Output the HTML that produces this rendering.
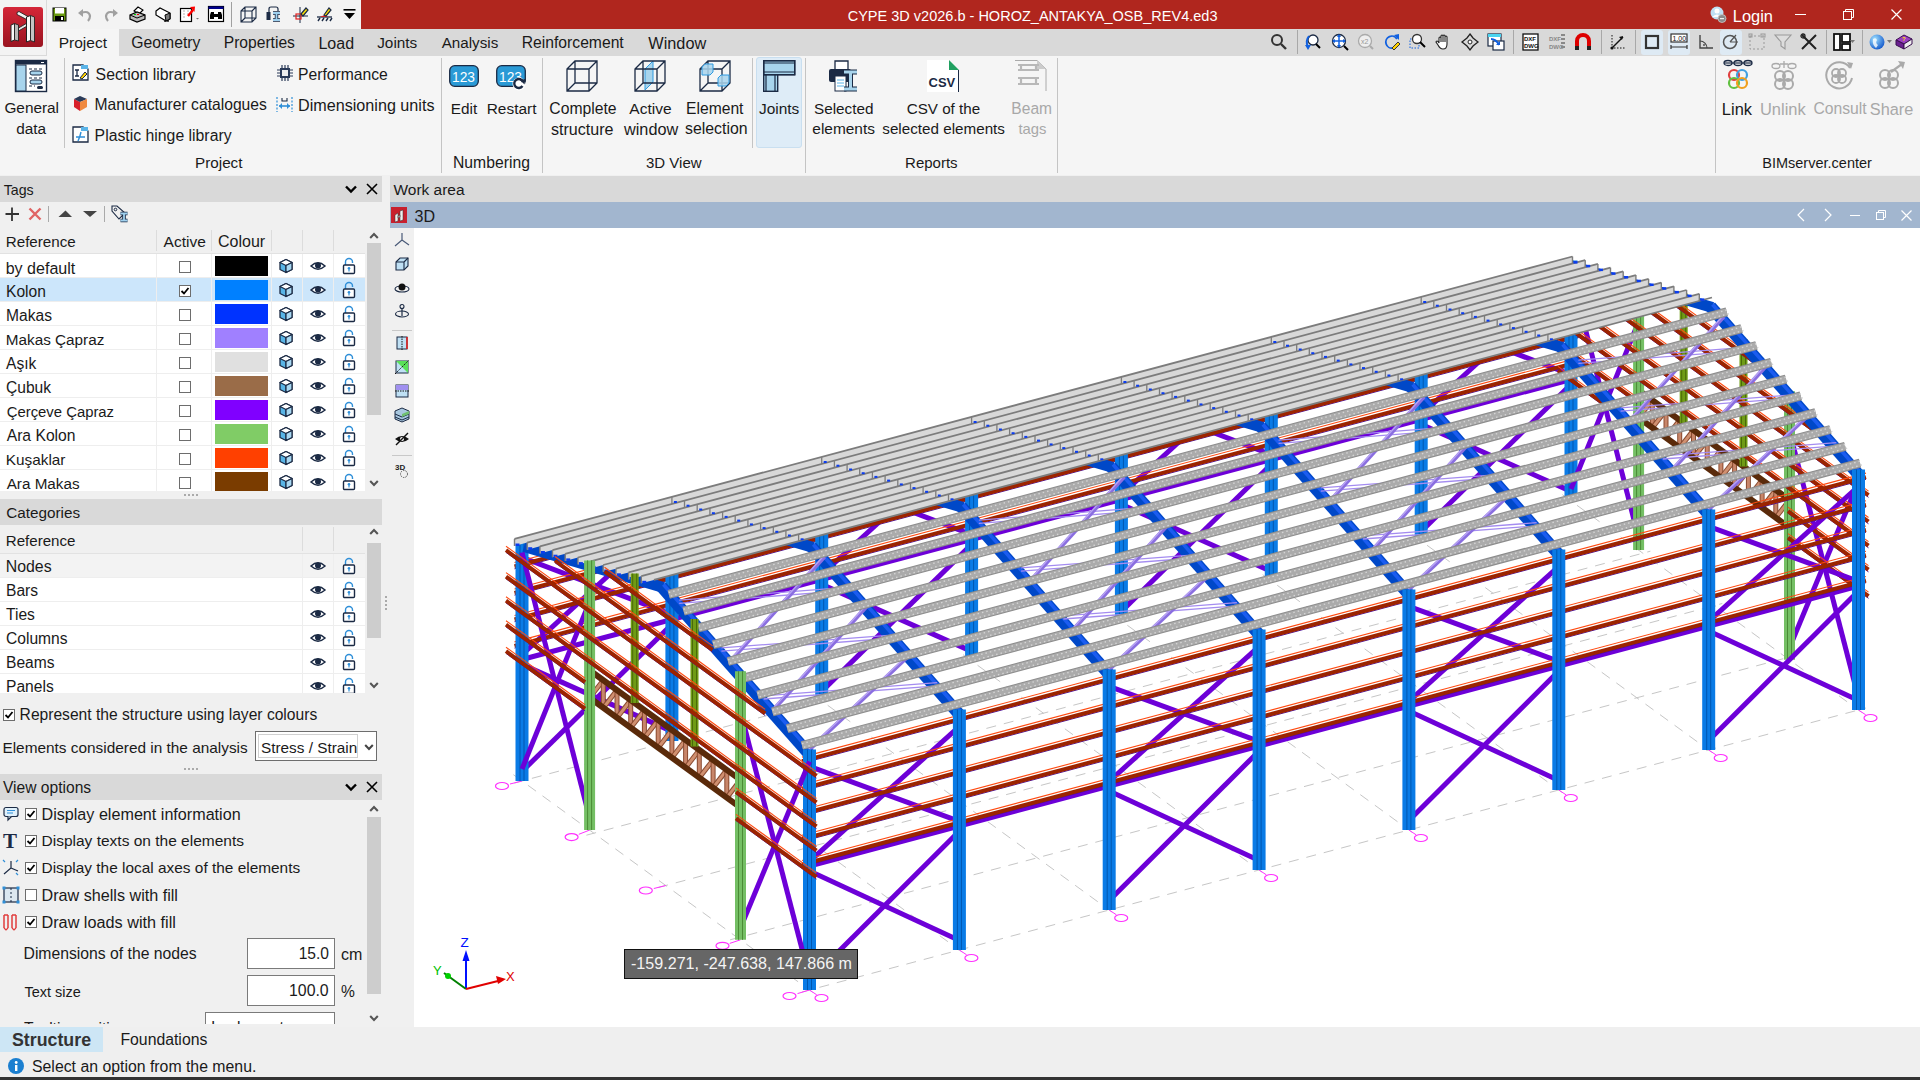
<!DOCTYPE html>
<html><head><meta charset="utf-8">
<style>
html,body{margin:0;padding:0;width:1920px;height:1080px;overflow:hidden;background:#f0f0f0;font-family:"Liberation Sans",sans-serif;font-size:15.6px;color:#1a1a1a}
.a{position:absolute}
.t{position:absolute;white-space:nowrap;line-height:22px;height:22px}
.c{text-align:center}
.g{color:#a8a8a8}
.sep{position:absolute;width:1px;background:#c8c8c8}
.row{position:absolute;left:0;width:365px;height:24px;background:#fff;border-bottom:1px solid #ececec;box-sizing:border-box}
.cb{position:absolute;width:10px;height:10px;border:1px solid #6d6d6d;background:#fff}
.sw{position:absolute;width:53px;height:20px}
svg{position:absolute;overflow:visible}
</style></head><body>

<!-- ===== Title bar / QAT ===== -->
<div class="a" style="left:0;top:0;width:361px;height:29px;background:#f3f3f3"></div>
<div class="a" style="left:361px;top:0;width:1559px;height:29px;background:#b0261e"></div>
<div class="t" style="left:847.70px;top:5px;font-size:14.53px;color:#fff;">CYPE 3D v2026.b - HOROZ_ANTAKYA_OSB_REV4.ed3</div>
<div class="t" style="left:1732.77px;top:5px;font-size:16.41px;color:#fff;">Login</div>
<svg class="a" style="left:52px;top:7px" width="15" height="15" viewBox="0 0 15 15"><rect x="0.5" y="0.5" width="14" height="14" fill="#000"/><rect x="1.5" y="1.5" width="12" height="12" fill="#6a9a10"/><rect x="3" y="1" width="9" height="5.5" fill="#fff"/><rect x="3" y="9" width="9" height="5" fill="#000"/><rect x="9" y="10" width="2" height="3" fill="#fff"/></svg>
<svg class="a" style="left:77px;top:7px" width="16" height="15" viewBox="0 0 16 15"><path d="M4 6 Q12 3 13 9 Q13 12 11 14" fill="none" stroke="#a0a0a0" stroke-width="2.2"/><path d="M1 6 L6 2 L6 10Z" fill="#a0a0a0"/></svg>
<svg class="a" style="left:103px;top:7px" width="16" height="15" viewBox="0 0 16 15"><path d="M12 6 Q4 3 3 9 Q3 12 5 14" fill="none" stroke="#a0a0a0" stroke-width="2.2"/><path d="M15 6 L10 2 L10 10Z" fill="#a0a0a0"/></svg>
<svg class="a" style="left:129px;top:6px" width="17" height="17" viewBox="0 0 17 17"><path d="M5 5 L9 1 L14 4 L10 8Z" fill="#fff" stroke="#000" stroke-width="1.1"/><path d="M1 9 L8 6 L16 9 L16 13 L8 16 L1 13Z" fill="#bbb" stroke="#000" stroke-width="1.2"/><path d="M1 9 L8 12 L16 9" fill="none" stroke="#000" stroke-width="1"/><rect x="5" y="8" width="2" height="1" fill="#0c0"/><rect x="8" y="8" width="2" height="1" fill="#e00"/></svg>
<svg class="a" style="left:155px;top:7px" width="17" height="15" viewBox="0 0 17 15"><path d="M1 4 L5 1 L15 6 L15 12 L11 14 L1 8Z" fill="#fff" stroke="#000" stroke-width="1.2"/><path d="M10 8 L15 6 L15 12 L11 14Z" fill="#777" stroke="#000" stroke-width="1"/><path d="M10 14 V15 M13 13 V15" stroke="#000" stroke-width="1.3"/></svg>
<svg class="a" style="left:180px;top:6px" width="20" height="16" viewBox="0 0 20 16"><rect x="0.5" y="2.5" width="11" height="13" fill="#fff" stroke="#000" stroke-width="1.2"/><path d="M3 5 H5 M3 8 H5 M3 11 H5 M7 5 H9 M7 8 H9" stroke="#ccc" stroke-width="1.5"/><path d="M8 10 L13 4" stroke="#f00" stroke-width="2.4"/><path d="M10 1 L15 0.5 L14.5 6Z" fill="#f00"/><path d="M16 12 L19 12 L17.5 13.5Z" fill="#777"/></svg>
<svg class="a" style="left:208px;top:6px" width="16" height="16" viewBox="0 0 16 16"><rect x="0.5" y="0.5" width="15" height="15" fill="#fff" stroke="#000" stroke-width="1.2"/><rect x="0.5" y="0.5" width="15" height="2.5" fill="#00008a"/><path d="M3 6 H6 V13 H2 V9Z M10 6 H13 L14 9 V13 H10Z" fill="#000"/><rect x="6" y="8" width="4" height="3" fill="#000"/></svg>
<div class="a" style="left:231px;top:2px;width:1px;height:25px;background:#a0a0a0"></div>
<svg class="a" style="left:240px;top:6px" width="17" height="17" viewBox="0 0 17 17"><path d="M1 5 L5 1 H16 V12 L12 16 H1Z M1 5 H12 V16 M12 5 L16 1 M5 1 V12 H16 M5 12 L1 16" fill="none" stroke="#1b2a44" stroke-width="1.1"/></svg>
<svg class="a" style="left:266px;top:6px" width="16" height="17" viewBox="0 0 16 17"><path d="M3 9 V3 Q3 1 5 1 H10 Q12 1 12 3 V5" fill="none" stroke="#1b2a44" stroke-width="1.2"/><rect x="0.5" y="6" width="4" height="8" fill="#1b2a44"/><path d="M7 7 H14 M10.5 7 V14 M7 14 H14" stroke="#1b2a44" stroke-width="3.4"/><path d="M7 7 H14 M10.5 7 V14 M7 14 H14" stroke="#9fd0ee" stroke-width="1.8"/></svg>
<svg class="a" style="left:292px;top:6px" width="17" height="17" viewBox="0 0 17 17"><path d="M1 10 H16 M8 1 V17" stroke="#1b2a44" stroke-width="1"/><rect x="4" y="8" width="5" height="5" fill="none" stroke="#e02020" stroke-width="1.2"/><path d="M9 8 L14 2 L16 4 L11 10Z" fill="#ffe000" stroke="#1b2a44" stroke-width="1.2"/></svg>
<svg class="a" style="left:316px;top:6px" width="17" height="17" viewBox="0 0 17 17"><path d="M1 11 H16" stroke="#1b2a44" stroke-width="1.3"/><path d="M2 15 L4 12 M6 15 L8 12 M10 15 L12 12 M14 15 L16 12" stroke="#1b2a44" stroke-width="1.4"/><path d="M4 11 Q8 8 12 11Z" fill="#e02020"/><path d="M8 9 L13 2 L15 4 L10 10Z" fill="#ffe000" stroke="#1b2a44" stroke-width="1.2"/></svg>
<svg class="a" style="left:343px;top:9px" width="13" height="11" viewBox="0 0 13 11"><rect x="0.5" y="0" width="12" height="1.6" fill="#000"/><path d="M1 4 L12 4 L6.5 10Z" fill="#000"/></svg>
<svg class="a" style="left:1710px;top:6px" width="17" height="17" viewBox="0 0 17 17"><circle cx="7" cy="7" r="6.5" fill="#bfe0f4"/><circle cx="7" cy="5" r="2.5" fill="#fff"/><path d="M2 11 Q7 6 12 11Z" fill="#fff"/><circle cx="12" cy="12.5" r="4" fill="#8a8a8a" stroke="#ccc" stroke-width="0.8"/><rect x="10" y="12" width="4" height="1.2" fill="#eee"/></svg>
<div class="a" style="left:1795px;top:14px;width:11px;height:1px;background:#fff"></div>
<svg class="a" style="left:1843px;top:9px" width="11" height="11" viewBox="0 0 11 11"><rect x="0.5" y="2.5" width="8" height="8" fill="none" stroke="#fff" stroke-width="1"/><path d="M2.5 2.5 V0.5 H10.5 V8.5 H8.5" fill="none" stroke="#fff" stroke-width="1"/></svg>
<svg class="a" style="left:1891px;top:9px" width="11" height="11" viewBox="0 0 11 11"><path d="M0.5 0.5 L10.5 10.5 M10.5 0.5 L0.5 10.5" stroke="#fff" stroke-width="1.2"/></svg>

<!-- logo block -->
<div class="a" style="left:0;top:0;width:46px;height:55px;background:#f3f3f3;border-right:1px solid #dadada;border-bottom:1px solid #dadada"></div>
<svg class="a" style="left:3px;top:7px" width="40" height="40" viewBox="0 0 40 40"><defs><linearGradient id="lg" x1="0" y1="0" x2="0" y2="1"><stop offset="0" stop-color="#d42638"/><stop offset="1" stop-color="#9a1420"/></linearGradient></defs><rect x="0" y="0" width="40" height="40" rx="3" fill="url(#lg)"/><path d="M14 5.5 L16 4.5 L28.5 11.5 L28.5 15 L14 7.5Z" fill="#f4f4f4" stroke="#222" stroke-width="0.9"/><path d="M15.5 21 L28.5 13.5 L28.5 16.5 L15.5 24Z" fill="#e8e8e8" stroke="#222" stroke-width="0.9"/><path d="M8 18 L11.5 16.5 L11.5 33 L8 34.5Z" fill="#fafafa" stroke="#222" stroke-width="1"/><path d="M11.5 16.5 L15.5 18 L15.5 34 L11.5 33Z" fill="#b8b8b8" stroke="#222" stroke-width="0.9"/><path d="M23.5 10 L27.5 8.5 L27.5 33.5 L23.5 35Z" fill="#fafafa" stroke="#222" stroke-width="1"/><path d="M27.5 8.5 L31.5 10 L31.5 35 L27.5 33.5Z" fill="#c4c4c4" stroke="#222" stroke-width="0.9"/></svg>

<!-- ===== Tab bar ===== -->
<div class="a" style="left:47px;top:29px;width:1873px;height:27px;background:#d9d9d9"></div>
<div class="a" style="left:47px;top:29px;width:72px;height:27px;background:#f5f5f5"></div>
<div class="t" style="left:58.73px;top:32px;font-size:15.53px;">Project</div>
<div class="t" style="left:131.30px;top:32px;font-size:15.74px;">Geometry</div>
<div class="t" style="left:223.72px;top:32px;font-size:15.64px;">Properties</div>
<div class="t" style="left:318.40px;top:32px;font-size:16.05px;">Load</div>
<div class="t" style="left:377.20px;top:32px;font-size:15.33px;">Joints</div>
<div class="t" style="left:441.70px;top:32px;font-size:15.20px;">Analysis</div>
<div class="t" style="left:521.72px;top:32px;font-size:15.69px;">Reinforcement</div>
<div class="t" style="left:648.30px;top:32px;font-size:16.29px;">Window</div>
<div class="a" style="left:1641px;top:30px;width:22px;height:25px;background:#deeaf4;border-radius:3px"></div>
<div class="a" style="left:1668px;top:30px;width:22px;height:25px;background:#deeaf4;border-radius:3px"></div>
<div class="a" style="left:1720px;top:30px;width:22px;height:25px;background:#deeaf4;border-radius:3px"></div>
<svg class="a" style="left:1270px;top:33px" width="18" height="18" viewBox="0 0 18 18"><circle cx="7" cy="7" r="5" fill="none" stroke="#333" stroke-width="2"/><path d="M11 11 L16 16" stroke="#333" stroke-width="2.4"/></svg>
<div class="a" style="left:1297px;top:30px;width:1px;height:24px;background:#a8a8a8"></div>
<div class="a" style="left:1513px;top:30px;width:1px;height:24px;background:#a8a8a8"></div>
<div class="a" style="left:1601px;top:30px;width:1px;height:24px;background:#a8a8a8"></div>
<div class="a" style="left:1635px;top:30px;width:1px;height:24px;background:#a8a8a8"></div>
<div class="a" style="left:1826px;top:30px;width:1px;height:24px;background:#a8a8a8"></div>
<div class="a" style="left:1862px;top:30px;width:1px;height:24px;background:#a8a8a8"></div>
<svg class="a" style="left:1304px;top:33px" width="18" height="18" viewBox="0 0 18 18"><circle cx="9" cy="7" r="5" fill="#fff" stroke="#1b2a44" stroke-width="1.3"/><path d="M12 11 L16 15" stroke="#000" stroke-width="2"/><path d="M5 3 Q1 8 4 14" fill="none" stroke="#1060e0" stroke-width="2"/><path d="M1 12 L4 17 L7 12Z" fill="#1060e0"/></svg>
<svg class="a" style="left:1331px;top:33px" width="18" height="18" viewBox="0 0 18 18"><circle cx="8" cy="8" r="6.5" fill="#fff" stroke="#1b2a44" stroke-width="1.3"/><path d="M8 2 V14 M2 8 H14" stroke="#1060e0" stroke-width="1.5"/><path d="M8 1 L6 4 H10Z M8 15 L6 12 H10Z M1 8 L4 6 V10Z M15 8 L12 6 V10Z" fill="#1060e0"/><path d="M13 13 L17 17" stroke="#000" stroke-width="2"/></svg>
<svg class="a" style="left:1357px;top:33px" width="18" height="18" viewBox="0 0 18 18"><circle cx="8" cy="8" r="6.5" fill="#eee" stroke="#aaa" stroke-width="1.3"/><text x="4" y="11" font-size="7" fill="#999" font-family="Liberation Sans">x2</text><path d="M13 13 L16 16" stroke="#aaa" stroke-width="2"/></svg>
<svg class="a" style="left:1383px;top:33px" width="18" height="18" viewBox="0 0 18 18"><path d="M14 6 A6 6 0 1 0 10 15" fill="none" stroke="#1060e0" stroke-width="1.8"/><path d="M11 2 L16 1 L16 7Z" fill="#1060e0"/><path d="M9 15 L15 9 L17 11 L11 17Z" fill="#ffd000" stroke="#333" stroke-width="1"/></svg>
<svg class="a" style="left:1409px;top:33px" width="18" height="18" viewBox="0 0 18 18"><rect x="1" y="6" width="9" height="9" fill="none" stroke="#1060e0" stroke-width="1" stroke-dasharray="1.5 1.5"/><circle cx="8" cy="6" r="4.5" fill="#fff" stroke="#333" stroke-width="1.3"/><path d="M11 9 L16 14" stroke="#000" stroke-width="2"/></svg>
<svg class="a" style="left:1435px;top:33px" width="18" height="18" viewBox="0 0 18 18"><path d="M4 10 V5 Q4 4 5 4 Q6 4 6 5 V9 V3 Q6 2 7 2 Q8 2 8 3 V9 V3 Q8 2 9 2 Q10 2 10 3 V9 V4 Q10 3 11 3 Q12 3 12 4 V11 Q12 16 8 16 Q5 16 3 12 L1 9 Q1 8 2 8 Q3 8 4 10Z" fill="#fff" stroke="#222" stroke-width="1.1"/></svg>
<svg class="a" style="left:1461px;top:33px" width="18" height="18" viewBox="0 0 18 18"><path d="M9 1 L12 5 L17 9 L12 13 L9 17 L6 13 L1 9 L6 5Z" fill="none" stroke="#222" stroke-width="1.3"/><circle cx="9" cy="9" r="2" fill="#fff" stroke="#222"/></svg>
<svg class="a" style="left:1487px;top:33px" width="18" height="18" viewBox="0 0 18 18"><rect x="1" y="1" width="13" height="12" fill="#fff" stroke="#1b2a44" stroke-width="1.2"/><rect x="1" y="1" width="13" height="3" fill="#4ad4f0"/><rect x="6" y="8" width="11" height="9" fill="#fff" stroke="#1b2a44" stroke-width="1.2"/><path d="M4 6 Q9 6 12 12" fill="none" stroke="#1060e0" stroke-width="1.8"/><path d="M9 12 H13 V8Z" fill="#1060e0"/></svg>
<svg class="a" style="left:1522px;top:33px" width="18" height="18" viewBox="0 0 18 18"><rect x="1" y="1" width="15" height="16" fill="#fff" stroke="#111" stroke-width="1.3"/><text x="2" y="8" font-size="6" font-weight="bold" fill="#111" font-family="Liberation Sans">DXF</text><text x="2" y="15" font-size="6" font-weight="bold" fill="#111" font-family="Liberation Sans">DWG</text></svg>
<svg class="a" style="left:1548px;top:33px" width="18" height="18" viewBox="0 0 18 18"><text x="1" y="8" font-size="6" font-weight="bold" fill="#888" font-family="Liberation Sans">DXF</text><text x="1" y="16" font-size="6" font-weight="bold" fill="#888" font-family="Liberation Sans">DWG</text><path d="M13 2 H17 M13 6 H17 M13 10 H17 M13 14 H17" stroke="#888" stroke-width="2"/></svg>
<svg class="a" style="left:1574px;top:33px" width="18" height="18" viewBox="0 0 18 18"><path d="M3 16 V8 A6 6 0 0 1 15 8 V16" fill="none" stroke="#d00" stroke-width="4"/><rect x="1" y="13" width="4" height="4" fill="#222"/><rect x="13" y="13" width="4" height="4" fill="#222"/></svg>
<svg class="a" style="left:1608px;top:33px" width="18" height="18" viewBox="0 0 18 18"><path d="M4 2 V15 H17" fill="none" stroke="#111" stroke-width="1" stroke-dasharray="1.5 1.5"/><path d="M4 15 L15 4" stroke="#111" stroke-width="1.4"/><path d="M15 3 L11 4 L14 7Z" fill="#111"/><circle cx="4" cy="15" r="1.6" fill="#111"/></svg>
<svg class="a" style="left:1643px;top:33px" width="18" height="18" viewBox="0 0 18 18"><rect x="3" y="3" width="12" height="12" fill="none" stroke="#333" stroke-width="2.2"/></svg>
<svg class="a" style="left:1669px;top:32px" width="20" height="20" viewBox="0 0 20 20"><rect x="2" y="2" width="16" height="8" fill="#fff" stroke="#333" stroke-width="1.2"/><text x="3.5" y="9" font-size="7" fill="#111" font-family="Liberation Sans">1.00</text><path d="M2 15 H18 M2 13 V17 M18 13 V17" stroke="#333" stroke-width="1.2"/></svg>
<svg class="a" style="left:1696px;top:33px" width="18" height="18" viewBox="0 0 18 18"><path d="M4 2 V15 H17" fill="none" stroke="#444" stroke-width="1.4"/><path d="M4 8 A7 7 0 0 1 11 15" fill="none" stroke="#444" stroke-width="1.1"/><circle cx="8" cy="12" r="0.9" fill="#444"/></svg>
<svg class="a" style="left:1722px;top:33px" width="18" height="18" viewBox="0 0 18 18"><circle cx="8" cy="9" r="6.5" fill="none" stroke="#555" stroke-width="1.5"/><path d="M8 9 H16 M8 9 L14 2" stroke="#555" stroke-width="1.2"/></svg>
<svg class="a" style="left:1748px;top:33px" width="18" height="18" viewBox="0 0 18 18"><rect x="2" y="3" width="14" height="13" fill="none" stroke="#999" stroke-width="1" stroke-dasharray="2 2"/><rect x="1" y="1" width="3" height="3" fill="none" stroke="#999"/><rect x="13" y="1" width="4" height="3" fill="none" stroke="#999"/></svg>
<svg class="a" style="left:1774px;top:33px" width="18" height="18" viewBox="0 0 18 18"><path d="M1 2 H17 L11 9 V16 L7 13 V9Z" fill="#ddd" stroke="#999" stroke-width="1.1"/></svg>
<svg class="a" style="left:1800px;top:33px" width="18" height="18" viewBox="0 0 18 18"><path d="M2 16 L16 2 M2 2 L16 16" stroke="#222" stroke-width="2"/><circle cx="3" cy="3" r="2" fill="none" stroke="#222" stroke-width="1.3"/></svg>
<svg class="a" style="left:1833px;top:33px" width="18" height="18" viewBox="0 0 18 18"><rect x="1" y="1" width="6" height="16" fill="#fff" stroke="#111" stroke-width="1.8"/><rect x="9" y="1" width="8" height="8" fill="#fff" stroke="#111" stroke-width="1.8"/><rect x="9" y="11" width="8" height="6" fill="#fff" stroke="#111" stroke-width="1.8"/></svg>
<svg class="a" style="left:1850px;top:40px" width="5" height="4" viewBox="0 0 5 4"><path d="M0 0 H5 L2.5 3Z" fill="#777"/></svg>
<svg class="a" style="left:1869px;top:33px" width="18" height="18" viewBox="0 0 18 18"><defs><radialGradient id="gl" cx="0.35" cy="0.3" r="0.8"><stop offset="0" stop-color="#9fe0ff"/><stop offset="1" stop-color="#0a50c8"/></radialGradient></defs><circle cx="8" cy="9" r="7.5" fill="url(#gl)"/><path d="M4 6 Q7 4 8 7 Q6 10 9 12 L7 15 Q3 12 4 6Z" fill="#fff" opacity="0.8"/></svg>
<svg class="a" style="left:1887px;top:40px" width="5" height="4" viewBox="0 0 5 4"><path d="M0 0 H5 L2.5 3Z" fill="#777"/></svg>
<svg class="a" style="left:1895px;top:33px" width="18" height="18" viewBox="0 0 18 18"><path d="M1 7 L9 2 L17 6 L9 11Z" fill="#9a40c0" stroke="#3a1050" stroke-width="1"/><path d="M1 7 L9 11 L9 16 L1 12Z" fill="#6a2090" stroke="#3a1050" stroke-width="1"/><path d="M9 11 L17 6 V11 L9 16Z" fill="#eee" stroke="#3a1050" stroke-width="1"/><text x="7" y="8" font-size="6" fill="#ffe000" font-weight="bold" font-family="Liberation Sans">?</text></svg>

<!-- ===== Ribbon ===== -->
<div class="a" style="left:0;top:56px;width:1920px;height:119px;background:#f5f5f5"></div>
<div class="a" style="left:756px;top:57px;width:46px;height:91px;background:#deecf7;border:1px solid #c9dff0;border-radius:3px;box-sizing:border-box"></div>
<div class="a" style="left:441px;top:58px;width:1px;height:115px;background:#c4c4c4"></div>
<div class="a" style="left:542px;top:58px;width:1px;height:115px;background:#c4c4c4"></div>
<div class="a" style="left:805px;top:58px;width:1px;height:115px;background:#c4c4c4"></div>
<div class="a" style="left:1057px;top:58px;width:1px;height:115px;background:#c4c4c4"></div>
<div class="a" style="left:1715px;top:58px;width:1px;height:115px;background:#c4c4c4"></div>
<div class="a" style="left:64px;top:58px;width:1px;height:90px;background:#c4c4c4"></div>
<div class="a" style="left:752px;top:58px;width:1px;height:90px;background:#c4c4c4"></div>
<svg class="a" style="left:15px;top:60px" width="32" height="32" viewBox="0 0 32 32"><rect x="0.5" y="0.5" width="31" height="31" fill="#fff" stroke="#1b2a44" stroke-width="1.4"/><rect x="0.5" y="0.5" width="31" height="4" fill="#1b2a44"/><rect x="1" y="5" width="10" height="26" fill="#a8d4ec" stroke="#1b2a44" stroke-width="1"/><path d="M14 9 H28 M14 18 H28 M14 26 H20" stroke="#1b2a44" stroke-width="1" stroke-dasharray="3 2"/><rect x="15" y="11" width="12" height="4" rx="2" fill="#a8d4ec" stroke="#1b2a44" stroke-width="1"/><rect x="15" y="20" width="12" height="4" rx="2" fill="#a8d4ec" stroke="#1b2a44" stroke-width="1"/><rect x="22" y="26" width="6" height="3" rx="1.5" fill="#1b2a44"/><rect x="26" y="2" width="3" height="1" fill="#fff"/></svg>
<div class="t" style="left:4.40px;top:97px;font-size:15.36px;">General</div><div class="t" style="left:16.25px;top:118px;font-size:15.36px;">data</div>
<svg class="a" style="left:72px;top:64px" width="17" height="17" viewBox="0 0 17 17"><path d="M1 1 H11 L16 5 V16 H1Z" fill="#fff" stroke="#1b2a44" stroke-width="1.3"/><rect x="9" y="1" width="7" height="4" fill="#5ab4e8"/><path d="M3 6 H7 M5 6 V12 M3 12 H7" stroke="#1b2a44" stroke-width="1.3"/><path d="M8 14 L13 8 L15 10 L10 15Z" fill="#ffd000" stroke="#1b2a44" stroke-width="1"/></svg>
<div class="t" style="left:95.60px;top:64px;font-size:15.81px;">Section library</div>
<svg class="a" style="left:73px;top:95px" width="15" height="17" viewBox="0 0 15 17"><path d="M7 1 L14 4 V12 L7 16 L1 12 V4Z" fill="#e8e8e8"/><path d="M1 4 L7 7 V16 L1 12Z" fill="#d8202a"/><path d="M7 1 L14 4 L7 7 L1 4Z" fill="#2a3a58"/><path d="M7 7 L14 4 V12 L7 16Z" fill="#f08a40"/></svg>
<div class="t" style="left:94.52px;top:94px;font-size:15.67px;">Manufacturer catalogues</div>
<svg class="a" style="left:72px;top:126px" width="17" height="17" viewBox="0 0 17 17"><path d="M1 1 H11 L16 5 V16 H1Z" fill="#fff" stroke="#1b2a44" stroke-width="1.3"/><rect x="9" y="1" width="7" height="4" fill="#5ab4e8"/><path d="M4 11 H13 M9 6 Q8 11 6 15" stroke="#2f8fd8" stroke-width="1.4" fill="none"/></svg>
<div class="t" style="left:94.61px;top:125px;font-size:15.80px;">Plastic hinge library</div>
<svg class="a" style="left:277px;top:65px" width="16" height="16" viewBox="0 0 16 16"><rect x="3" y="3" width="10" height="10" fill="#2a3a58"/><rect x="5" y="5" width="6" height="6" fill="#eee"/><path d="M5 0 V3 M8 0 V3 M11 0 V3 M5 13 V16 M8 13 V16 M11 13 V16 M0 5 H3 M0 8 H3 M0 11 H3 M13 5 H16 M13 8 H16 M13 11 H16" stroke="#2a3a58" stroke-width="1.2"/></svg>
<div class="t" style="left:298.02px;top:64px;font-size:15.70px;">Performance</div>
<svg class="a" style="left:276px;top:96px" width="17" height="17" viewBox="0 0 17 17"><path d="M1 1 V16 M16 1 V16" stroke="#2f8fd8" stroke-width="1.2" stroke-dasharray="2 1.5"/><path d="M3 10 H14" stroke="#2f8fd8" stroke-width="1.6"/><path d="M3 10 L6 7 V13Z M14 10 L11 7 V13Z" fill="#2f8fd8"/><path d="M6 2 V5 H11 V2" fill="none" stroke="#1b2a44" stroke-width="1.1"/></svg>
<div class="t" style="left:297.99px;top:94px;font-size:16.16px;">Dimensioning units</div>
<div class="t" style="left:195.05px;top:152px;font-size:15.24px;">Project</div>
<svg class="a" style="left:449px;top:65px" width="30" height="22" viewBox="0 0 30 22"><rect x="0.7" y="0.7" width="28.6" height="20.6" rx="5" fill="#2a9ad6" stroke="#1b2a44" stroke-width="1.3"/><text x="3" y="16.5" font-size="14.5" fill="#fff" font-family="Liberation Sans" textLength="23" lengthAdjust="spacingAndGlyphs">123</text></svg>
<div class="t" style="left:450.74px;top:98px;font-size:15.34px;">Edit</div>
<svg class="a" style="left:496px;top:65px" width="31" height="26" viewBox="0 0 31 26"><rect x="0.7" y="0.7" width="28.6" height="20.6" rx="5" fill="#2a9ad6" stroke="#1b2a44" stroke-width="1.3"/><text x="3" y="16.5" font-size="14.5" fill="#fff" font-family="Liberation Sans" textLength="23" lengthAdjust="spacingAndGlyphs">123</text><circle cx="23" cy="19" r="6.5" fill="#fff"/><path d="M27 17 A4.5 4.5 0 1 0 26.5 21" fill="none" stroke="#1b2a44" stroke-width="2.4"/><path d="M24 15 L29.5 14 L28.5 19.5Z" fill="#1b2a44"/></svg>
<div class="t" style="left:486.74px;top:98px;font-size:15.43px;">Restart</div>
<div class="t" style="left:453.02px;top:152px;font-size:15.72px;">Numbering</div>
<svg class="a" style="left:566px;top:60px" width="32" height="32" viewBox="0 0 32 32"><path d="M1 9 L9 1 H31 V23 L23 31 H1Z M1 9 H23 V31 M23 9 L31 1 M9 1 V23 H31 M9 23 L1 31" fill="none" stroke="#1b2a44" stroke-width="1.3"/></svg>
<div class="t" style="left:549.30px;top:98px;font-size:15.73px;">Complete</div><div class="t" style="left:551.00px;top:118px;font-size:16.09px;">structure</div>
<svg class="a" style="left:634px;top:60px" width="32" height="32" viewBox="0 0 32 32"><path d="M11 30 V9 L19 1 V22Z" fill="#a8d4ec" stroke="#2f9ae0" stroke-width="1"/><path d="M1 9 L9 1 H31 V23 L23 31 H1Z M1 9 H23 V31 M23 9 L31 1 M9 1 V23 H31 M9 23 L1 31" fill="none" stroke="#1b2a44" stroke-width="1.3"/></svg>
<div class="t" style="left:629.30px;top:98px;font-size:15.53px;">Active</div><div class="t" style="left:624.02px;top:118px;font-size:16.26px;">window</div>
<svg class="a" style="left:699px;top:60px" width="32" height="32" viewBox="0 0 32 32"><path d="M1 9 L9 1 H31 V23 L23 31 H1Z M1 9 H23 V31 M23 9 L31 1 M9 1 V23 H31 M9 23 L1 31" fill="none" stroke="#1b2a44" stroke-width="1.3"/><path d="M3 7 L6 4 H14 V12 L11 15 H3Z" fill="#a8d4ec" fill-opacity="0.85" stroke="#2f9ae0" stroke-width="1"/><path d="M19 18 L22 15 H30 V23 L27 26 H19Z" fill="#a8d4ec" fill-opacity="0.85" stroke="#2f9ae0" stroke-width="1"/></svg>
<div class="t" style="left:686.02px;top:98px;font-size:15.66px;">Element</div><div class="t" style="left:685.00px;top:118px;font-size:15.86px;">selection</div>
<div class="t" style="left:646.00px;top:152px;font-size:15.00px;">3D View</div>
<svg class="a" style="left:763px;top:60px" width="32" height="32" viewBox="0 0 32 32"><rect x="0.7" y="0.7" width="31" height="14" fill="#a8d4ec" stroke="#1b2a44" stroke-width="1.4"/><path d="M0.7 3 H31.7 M0.7 12 H31.7" stroke="#1b2a44" stroke-width="1.2"/><rect x="0.7" y="14.7" width="14" height="16.6" fill="#a8d4ec" stroke="#1b2a44" stroke-width="1.4"/><path d="M3 14.7 V31.3 M12 14.7 V31.3" stroke="#1b2a44" stroke-width="1.2"/><rect x="0.7" y="0.7" width="31" height="14" fill="none" stroke="#1b2a44" stroke-width="1.4"/></svg>
<div class="t" style="left:759.00px;top:98px;font-size:15.43px;">Joints</div>
<svg class="a" style="left:828px;top:60px" width="31" height="32" viewBox="0 0 31 32"><path d="M7 9 V1 H20 V9" fill="#fff" stroke="#1b2a44" stroke-width="1.3"/><rect x="1" y="9" width="22" height="13" rx="2" fill="#1b2a44"/><rect x="7" y="16" width="11" height="15" fill="#fff" stroke="#1b2a44" stroke-width="1"/><path d="M9 20 H16 M9 23 H16 M9 26 H16" stroke="#5ab4e8" stroke-width="1"/><path d="M16 12 H29 M22.5 12 V29 M16 29 H29" stroke="#1b2a44" stroke-width="5"/><path d="M16 12 H29 M22.5 12 V29 M16 29 H29" stroke="#a8d4ec" stroke-width="3"/></svg>
<div class="t" style="left:814.00px;top:98px;font-size:15.30px;">Selected</div><div class="t" style="left:812.30px;top:118px;font-size:15.45px;">elements</div>
<svg class="a" style="left:927px;top:60px" width="32" height="32" viewBox="0 0 32 32"><path d="M0 0 H22 L32 10 V32 H0Z" fill="#fff"/><path d="M22 0 L32 10 H22Z" fill="#20a060"/><path d="M31.5 10 V32" stroke="#1b2a44" stroke-width="1"/><text x="1.5" y="27" font-size="13" font-weight="bold" fill="#1b2a44" font-family="Liberation Sans">CSV</text></svg>
<div class="t" style="left:906.70px;top:98px;font-size:15.20px;">CSV of the</div><div class="t" style="left:882.30px;top:118px;font-size:15.22px;">selected elements</div>
<svg class="a" style="left:1015px;top:60px" width="32" height="32" viewBox="0 0 32 32"><path d="M0 0.5 H22 L31 9 V31" fill="none" stroke="#aaa" stroke-width="1"/><path d="M22 0.5 L31 9 H22Z" fill="#ccc"/><path d="M3 5 H24 M3 10 H24 M6 5 V10 M21 5 V10 M3 18 H24 M3 24 H24 M6 18 V24 M21 18 V24" stroke="#b8b8b8" stroke-width="2.2" fill="none"/></svg>
<div class="t g" style="left:1011.33px;top:98px;font-size:15.58px;">Beam</div><div class="t g" style="left:1018.50px;top:118px;font-size:14.81px;">tags</div>
<div class="t" style="left:905.06px;top:152px;font-size:15.03px;">Reports</div>
<svg class="a" style="left:1722px;top:60px" width="32" height="32" viewBox="0 0 32 32"><path d="M2 3 H30" stroke="#1b2a44" stroke-width="1.2"/><ellipse cx="6" cy="3" rx="4" ry="2.5" fill="none" stroke="#1b2a44" stroke-width="1.3"/><ellipse cx="16" cy="3" rx="4" ry="2.5" fill="none" stroke="#1b2a44" stroke-width="1.3"/><ellipse cx="26" cy="3" rx="4" ry="2.5" fill="none" stroke="#1b2a44" stroke-width="1.3"/><circle cx="12" cy="15" r="5" fill="none" stroke="#e04040" stroke-width="2.2"/><circle cx="20" cy="15" r="5" fill="none" stroke="#40a0e0" stroke-width="2.2"/><circle cx="12" cy="23" r="5" fill="none" stroke="#60c040" stroke-width="2.2"/><circle cx="20" cy="23" r="5" fill="none" stroke="#f0a020" stroke-width="2.2"/></svg>
<div class="t" style="left:1721.87px;top:98px;font-size:16.41px;">Link</div>
<svg class="a" style="left:1768px;top:60px" width="32" height="32" viewBox="0 0 32 32"><path d="M16 1 V8 M12 4 H20" stroke="#aaa" stroke-width="1.3"/><ellipse cx="8" cy="6" rx="4" ry="2.5" fill="none" stroke="#aaa" stroke-width="1.3"/><ellipse cx="24" cy="6" rx="4" ry="2.5" fill="none" stroke="#aaa" stroke-width="1.3"/><circle cx="12" cy="16" r="5" fill="none" stroke="#aaa" stroke-width="2"/><circle cx="20" cy="16" r="5" fill="none" stroke="#aaa" stroke-width="2"/><circle cx="12" cy="24" r="5" fill="none" stroke="#aaa" stroke-width="2"/><circle cx="20" cy="24" r="5" fill="none" stroke="#aaa" stroke-width="2"/></svg>
<div class="t g" style="left:1759.97px;top:98px;font-size:16.48px;">Unlink</div>
<svg class="a" style="left:1823px;top:60px" width="32" height="32" viewBox="0 0 32 32"><path d="M27 8 A13 13 0 1 0 29 18" fill="none" stroke="#aaa" stroke-width="2"/><path d="M24 2 L30 3 L28 9Z" fill="#aaa"/><circle cx="13" cy="13" r="4" fill="none" stroke="#aaa" stroke-width="1.8"/><circle cx="19" cy="13" r="4" fill="none" stroke="#aaa" stroke-width="1.8"/><circle cx="13" cy="19" r="4" fill="none" stroke="#aaa" stroke-width="1.8"/><circle cx="19" cy="19" r="4" fill="none" stroke="#aaa" stroke-width="1.8"/></svg>
<div class="t g" style="left:1813.40px;top:98px;font-size:15.71px;">Consult</div>
<svg class="a" style="left:1875px;top:60px" width="32" height="32" viewBox="0 0 32 32"><path d="M16 12 L27 4" stroke="#aaa" stroke-width="2.2"/><path d="M23 1 L30 2 L28 9Z" fill="#aaa"/><circle cx="10" cy="15" r="5" fill="none" stroke="#aaa" stroke-width="2"/><circle cx="18" cy="15" r="5" fill="none" stroke="#aaa" stroke-width="2"/><circle cx="10" cy="23" r="5" fill="none" stroke="#aaa" stroke-width="2"/><circle cx="18" cy="23" r="5" fill="none" stroke="#aaa" stroke-width="2"/></svg>
<div class="t g" style="left:1869.80px;top:98px;font-size:16.30px;">Share</div>
<div class="t" style="left:1762.29px;top:152px;font-size:14.51px;">BIMserver.center</div>

<!-- ===== Left panels ===== -->
<div class="a" style="left:0;top:176px;width:382px;height:26px;background:#d9d9d9"></div>
<div class="t" style="left:3.70px;top:179px;font-size:14.20px;">Tags</div>
<svg class="a" style="left:345px;top:183px" width="12" height="12" viewBox="-6 -6 12 12"><path d="M-5 -2.5 L0 2.5 L5 -2.5" fill="none" stroke="#000" stroke-width="2.4"/></svg>
<svg class="a" style="left:365px;top:182px" width="14" height="14" viewBox="0 0 14 14"><path d="M2 2 L12 12 M12 2 L2 12" stroke="#000" stroke-width="1.6"/></svg>
<svg class="a" style="left:4px;top:206px" width="16" height="16" viewBox="0 0 16 16"><path d="M8 1.5 V15 M1.5 8 H15" stroke="#333" stroke-width="1.8"/></svg>
<svg class="a" style="left:27px;top:206px" width="16" height="16" viewBox="0 0 16 16"><path d="M2.5 2.5 L13.5 13.5 M13.5 2.5 L2.5 13.5" stroke="#e06464" stroke-width="2.4"/></svg>
<div class="a" style="left:48px;top:206px;width:1px;height:16px;background:#aaa"></div>
<svg class="a" style="left:57px;top:206px" width="16" height="16" viewBox="0 0 16 16"><path d="M1.5 11 L8.5 4.5 L15 11Z" fill="#444"/></svg>
<svg class="a" style="left:81px;top:206px" width="16" height="16" viewBox="0 0 16 16"><path d="M2 5 L16 5 L9 11Z" fill="#444"/></svg>
<div class="a" style="left:104px;top:206px;width:1px;height:16px;background:#aaa"></div>
<svg class="a" style="left:111px;top:205px" width="18" height="18" viewBox="0 0 18 18"><path d="M1 1 L6 1 L14 8 L8 14 L1 6Z" fill="none" stroke="#1b2a44" stroke-width="1.1"/><circle cx="4.5" cy="4.5" r="1.3" fill="none" stroke="#1b2a44" stroke-width="1"/><path d="M9.5 8.5 H16.5 M13 8.5 V15.5 M9.5 15.5 H16.5" stroke="#1b2a44" stroke-width="3.6"/><path d="M9.5 8.5 H16.5 M13 8.5 V15.5 M9.5 15.5 H16.5" stroke="#9fd0ee" stroke-width="1.8"/></svg>
<div class="a" style="left:0;top:228px;width:365px;height:25px;background:#f0f0f0;border-bottom:1px solid #e2e2e2"></div>
<div class="a" style="left:156px;top:230px;width:1px;height:21px;background:#dcdcdc"></div>
<div class="a" style="left:211px;top:230px;width:1px;height:21px;background:#dcdcdc"></div>
<div class="a" style="left:271px;top:230px;width:1px;height:21px;background:#dcdcdc"></div>
<div class="a" style="left:302px;top:230px;width:1px;height:21px;background:#dcdcdc"></div>
<div class="a" style="left:333px;top:230px;width:1px;height:21px;background:#dcdcdc"></div>
<div class="t" style="left:5.75px;top:231px;font-size:15.18px;">Reference</div>
<div class="t" style="left:163.60px;top:231px;font-size:15.50px;">Active</div>
<div class="t" style="left:218.00px;top:231px;font-size:16.00px;">Colour</div>
<div class="a" style="left:0;top:254px;width:365px;height:237px;overflow:hidden">
<div class="a" style="left:0;top:0px;width:365px;height:24px;background:#fff"></div>
<div class="a" style="left:0;top:23px;width:365px;height:1px;background:#eeeeee"></div>
<div class="a" style="left:156px;top:0px;width:1px;height:24px;background:#eeeeee"></div>
<div class="a" style="left:211px;top:0px;width:1px;height:24px;background:#eeeeee"></div>
<div class="a" style="left:271px;top:0px;width:1px;height:24px;background:#eeeeee"></div>
<div class="a" style="left:302px;top:0px;width:1px;height:24px;background:#eeeeee"></div>
<div class="a" style="left:333px;top:0px;width:1px;height:24px;background:#eeeeee"></div>
<div class="t" style="left:5.70px;top:3px;font-size:16.06px;">by default</div>
<div class="cb" style="left:179px;top:7px"></div>
<div class="sw" style="left:215px;top:2px;background:#000000"></div>
<svg class="a" style="left:278px;top:4px" width="16" height="16" viewBox="0 0 16 16"><path d="M8 1.5 L14 4.5 L14 11.5 L8 14.5 L2 11.5 L2 4.5 Z" fill="#58b4e6" stroke="#1b2a44" stroke-width="1.3" stroke-linejoin="round"/><path d="M2 4.5 L8 7.5 L14 4.5 L8 1.5 Z" fill="#fff" stroke="#1b2a44" stroke-width="1.2" stroke-linejoin="round"/><path d="M8 7.5 L8 14.5" stroke="#1b2a44" stroke-width="1.2"/><path d="M8 7.5 L14 4.5 L14 11.5 L8 14.5Z" fill="#a9d8f2" stroke="#1b2a44" stroke-width="1.2" stroke-linejoin="round"/></svg><svg class="a" style="left:310px;top:4px" width="16" height="16" viewBox="0 0 16 16"><path d="M1 8 Q8 1.5 15 8 Q8 14.5 1 8Z" fill="#fff" stroke="#1b2a44" stroke-width="1.5"/><circle cx="8" cy="7.6" r="3" fill="#1b2a44"/></svg><svg class="a" style="left:341px;top:3px" width="16" height="18" viewBox="0 0 16 18"><path d="M4.5 8 V5 A3.5 3.5 0 0 1 11.5 5 V6" fill="none" stroke="#2f8fd8" stroke-width="1.4"/><rect x="2.5" y="8" width="11" height="8.5" rx="1" fill="#fff" stroke="#1b2a44" stroke-width="1.4"/><circle cx="8" cy="11.3" r="1.3" fill="#2f8fd8"/><rect x="7.4" y="11.5" width="1.2" height="3" fill="#2f8fd8"/></svg>
<div class="a" style="left:0;top:24px;width:365px;height:24px;background:#cce6fb"></div>
<div class="a" style="left:0;top:47px;width:365px;height:1px;background:#eeeeee"></div>
<div class="a" style="left:156px;top:24px;width:1px;height:24px;background:#eeeeee"></div>
<div class="a" style="left:211px;top:24px;width:1px;height:24px;background:#eeeeee"></div>
<div class="a" style="left:271px;top:24px;width:1px;height:24px;background:#eeeeee"></div>
<div class="a" style="left:302px;top:24px;width:1px;height:24px;background:#eeeeee"></div>
<div class="a" style="left:333px;top:24px;width:1px;height:24px;background:#eeeeee"></div>
<div class="t" style="left:6px;top:27px">Kolon</div>
<div class="cb" style="left:179px;top:31px"></div><svg class="a" style="left:179px;top:31px" width="12" height="12" viewBox="0 0 12 12"><path d="M2.5 6 L5 8.5 L9.5 3" fill="none" stroke="#000" stroke-width="1.8"/></svg>
<div class="sw" style="left:215px;top:26px;background:#0080ff"></div>
<svg class="a" style="left:278px;top:28px" width="16" height="16" viewBox="0 0 16 16"><path d="M8 1.5 L14 4.5 L14 11.5 L8 14.5 L2 11.5 L2 4.5 Z" fill="#58b4e6" stroke="#1b2a44" stroke-width="1.3" stroke-linejoin="round"/><path d="M2 4.5 L8 7.5 L14 4.5 L8 1.5 Z" fill="#fff" stroke="#1b2a44" stroke-width="1.2" stroke-linejoin="round"/><path d="M8 7.5 L8 14.5" stroke="#1b2a44" stroke-width="1.2"/><path d="M8 7.5 L14 4.5 L14 11.5 L8 14.5Z" fill="#a9d8f2" stroke="#1b2a44" stroke-width="1.2" stroke-linejoin="round"/></svg><svg class="a" style="left:310px;top:28px" width="16" height="16" viewBox="0 0 16 16"><path d="M1 8 Q8 1.5 15 8 Q8 14.5 1 8Z" fill="#fff" stroke="#1b2a44" stroke-width="1.5"/><circle cx="8" cy="7.6" r="3" fill="#1b2a44"/></svg><svg class="a" style="left:341px;top:27px" width="16" height="18" viewBox="0 0 16 18"><path d="M4.5 8 V5 A3.5 3.5 0 0 1 11.5 5 V6" fill="none" stroke="#2f8fd8" stroke-width="1.4"/><rect x="2.5" y="8" width="11" height="8.5" rx="1" fill="#fff" stroke="#1b2a44" stroke-width="1.4"/><circle cx="8" cy="11.3" r="1.3" fill="#2f8fd8"/><rect x="7.4" y="11.5" width="1.2" height="3" fill="#2f8fd8"/></svg>
<div class="a" style="left:0;top:48px;width:365px;height:24px;background:#fff"></div>
<div class="a" style="left:0;top:71px;width:365px;height:1px;background:#eeeeee"></div>
<div class="a" style="left:156px;top:48px;width:1px;height:24px;background:#eeeeee"></div>
<div class="a" style="left:211px;top:48px;width:1px;height:24px;background:#eeeeee"></div>
<div class="a" style="left:271px;top:48px;width:1px;height:24px;background:#eeeeee"></div>
<div class="a" style="left:302px;top:48px;width:1px;height:24px;background:#eeeeee"></div>
<div class="a" style="left:333px;top:48px;width:1px;height:24px;background:#eeeeee"></div>
<div class="t" style="left:6px;top:51px">Makas</div>
<div class="cb" style="left:179px;top:55px"></div>
<div class="sw" style="left:215px;top:50px;background:#0033ff"></div>
<svg class="a" style="left:278px;top:52px" width="16" height="16" viewBox="0 0 16 16"><path d="M8 1.5 L14 4.5 L14 11.5 L8 14.5 L2 11.5 L2 4.5 Z" fill="#58b4e6" stroke="#1b2a44" stroke-width="1.3" stroke-linejoin="round"/><path d="M2 4.5 L8 7.5 L14 4.5 L8 1.5 Z" fill="#fff" stroke="#1b2a44" stroke-width="1.2" stroke-linejoin="round"/><path d="M8 7.5 L8 14.5" stroke="#1b2a44" stroke-width="1.2"/><path d="M8 7.5 L14 4.5 L14 11.5 L8 14.5Z" fill="#a9d8f2" stroke="#1b2a44" stroke-width="1.2" stroke-linejoin="round"/></svg><svg class="a" style="left:310px;top:52px" width="16" height="16" viewBox="0 0 16 16"><path d="M1 8 Q8 1.5 15 8 Q8 14.5 1 8Z" fill="#fff" stroke="#1b2a44" stroke-width="1.5"/><circle cx="8" cy="7.6" r="3" fill="#1b2a44"/></svg><svg class="a" style="left:341px;top:51px" width="16" height="18" viewBox="0 0 16 18"><path d="M4.5 8 V5 A3.5 3.5 0 0 1 11.5 5 V6" fill="none" stroke="#2f8fd8" stroke-width="1.4"/><rect x="2.5" y="8" width="11" height="8.5" rx="1" fill="#fff" stroke="#1b2a44" stroke-width="1.4"/><circle cx="8" cy="11.3" r="1.3" fill="#2f8fd8"/><rect x="7.4" y="11.5" width="1.2" height="3" fill="#2f8fd8"/></svg>
<div class="a" style="left:0;top:72px;width:365px;height:24px;background:#fff"></div>
<div class="a" style="left:0;top:95px;width:365px;height:1px;background:#eeeeee"></div>
<div class="a" style="left:156px;top:72px;width:1px;height:24px;background:#eeeeee"></div>
<div class="a" style="left:211px;top:72px;width:1px;height:24px;background:#eeeeee"></div>
<div class="a" style="left:271px;top:72px;width:1px;height:24px;background:#eeeeee"></div>
<div class="a" style="left:302px;top:72px;width:1px;height:24px;background:#eeeeee"></div>
<div class="a" style="left:333px;top:72px;width:1px;height:24px;background:#eeeeee"></div>
<div class="t" style="left:5.74px;top:75px;font-size:15.30px;">Makas Çapraz</div>
<div class="cb" style="left:179px;top:79px"></div>
<div class="sw" style="left:215px;top:74px;background:#a080ff"></div>
<svg class="a" style="left:278px;top:76px" width="16" height="16" viewBox="0 0 16 16"><path d="M8 1.5 L14 4.5 L14 11.5 L8 14.5 L2 11.5 L2 4.5 Z" fill="#58b4e6" stroke="#1b2a44" stroke-width="1.3" stroke-linejoin="round"/><path d="M2 4.5 L8 7.5 L14 4.5 L8 1.5 Z" fill="#fff" stroke="#1b2a44" stroke-width="1.2" stroke-linejoin="round"/><path d="M8 7.5 L8 14.5" stroke="#1b2a44" stroke-width="1.2"/><path d="M8 7.5 L14 4.5 L14 11.5 L8 14.5Z" fill="#a9d8f2" stroke="#1b2a44" stroke-width="1.2" stroke-linejoin="round"/></svg><svg class="a" style="left:310px;top:76px" width="16" height="16" viewBox="0 0 16 16"><path d="M1 8 Q8 1.5 15 8 Q8 14.5 1 8Z" fill="#fff" stroke="#1b2a44" stroke-width="1.5"/><circle cx="8" cy="7.6" r="3" fill="#1b2a44"/></svg><svg class="a" style="left:341px;top:75px" width="16" height="18" viewBox="0 0 16 18"><path d="M4.5 8 V5 A3.5 3.5 0 0 1 11.5 5 V6" fill="none" stroke="#2f8fd8" stroke-width="1.4"/><rect x="2.5" y="8" width="11" height="8.5" rx="1" fill="#fff" stroke="#1b2a44" stroke-width="1.4"/><circle cx="8" cy="11.3" r="1.3" fill="#2f8fd8"/><rect x="7.4" y="11.5" width="1.2" height="3" fill="#2f8fd8"/></svg>
<div class="a" style="left:0;top:96px;width:365px;height:24px;background:#fff"></div>
<div class="a" style="left:0;top:119px;width:365px;height:1px;background:#eeeeee"></div>
<div class="a" style="left:156px;top:96px;width:1px;height:24px;background:#eeeeee"></div>
<div class="a" style="left:211px;top:96px;width:1px;height:24px;background:#eeeeee"></div>
<div class="a" style="left:271px;top:96px;width:1px;height:24px;background:#eeeeee"></div>
<div class="a" style="left:302px;top:96px;width:1px;height:24px;background:#eeeeee"></div>
<div class="a" style="left:333px;top:96px;width:1px;height:24px;background:#eeeeee"></div>
<div class="t" style="left:6px;top:99px">Aşık</div>
<div class="cb" style="left:179px;top:103px"></div>
<div class="sw" style="left:215px;top:98px;background:#e0e0e0"></div>
<svg class="a" style="left:278px;top:100px" width="16" height="16" viewBox="0 0 16 16"><path d="M8 1.5 L14 4.5 L14 11.5 L8 14.5 L2 11.5 L2 4.5 Z" fill="#58b4e6" stroke="#1b2a44" stroke-width="1.3" stroke-linejoin="round"/><path d="M2 4.5 L8 7.5 L14 4.5 L8 1.5 Z" fill="#fff" stroke="#1b2a44" stroke-width="1.2" stroke-linejoin="round"/><path d="M8 7.5 L8 14.5" stroke="#1b2a44" stroke-width="1.2"/><path d="M8 7.5 L14 4.5 L14 11.5 L8 14.5Z" fill="#a9d8f2" stroke="#1b2a44" stroke-width="1.2" stroke-linejoin="round"/></svg><svg class="a" style="left:310px;top:100px" width="16" height="16" viewBox="0 0 16 16"><path d="M1 8 Q8 1.5 15 8 Q8 14.5 1 8Z" fill="#fff" stroke="#1b2a44" stroke-width="1.5"/><circle cx="8" cy="7.6" r="3" fill="#1b2a44"/></svg><svg class="a" style="left:341px;top:99px" width="16" height="18" viewBox="0 0 16 18"><path d="M4.5 8 V5 A3.5 3.5 0 0 1 11.5 5 V6" fill="none" stroke="#2f8fd8" stroke-width="1.4"/><rect x="2.5" y="8" width="11" height="8.5" rx="1" fill="#fff" stroke="#1b2a44" stroke-width="1.4"/><circle cx="8" cy="11.3" r="1.3" fill="#2f8fd8"/><rect x="7.4" y="11.5" width="1.2" height="3" fill="#2f8fd8"/></svg>
<div class="a" style="left:0;top:120px;width:365px;height:24px;background:#fff"></div>
<div class="a" style="left:0;top:143px;width:365px;height:1px;background:#eeeeee"></div>
<div class="a" style="left:156px;top:120px;width:1px;height:24px;background:#eeeeee"></div>
<div class="a" style="left:211px;top:120px;width:1px;height:24px;background:#eeeeee"></div>
<div class="a" style="left:271px;top:120px;width:1px;height:24px;background:#eeeeee"></div>
<div class="a" style="left:302px;top:120px;width:1px;height:24px;background:#eeeeee"></div>
<div class="a" style="left:333px;top:120px;width:1px;height:24px;background:#eeeeee"></div>
<div class="t" style="left:6px;top:123px">Çubuk</div>
<div class="cb" style="left:179px;top:127px"></div>
<div class="sw" style="left:215px;top:122px;background:#9a6c48"></div>
<svg class="a" style="left:278px;top:124px" width="16" height="16" viewBox="0 0 16 16"><path d="M8 1.5 L14 4.5 L14 11.5 L8 14.5 L2 11.5 L2 4.5 Z" fill="#58b4e6" stroke="#1b2a44" stroke-width="1.3" stroke-linejoin="round"/><path d="M2 4.5 L8 7.5 L14 4.5 L8 1.5 Z" fill="#fff" stroke="#1b2a44" stroke-width="1.2" stroke-linejoin="round"/><path d="M8 7.5 L8 14.5" stroke="#1b2a44" stroke-width="1.2"/><path d="M8 7.5 L14 4.5 L14 11.5 L8 14.5Z" fill="#a9d8f2" stroke="#1b2a44" stroke-width="1.2" stroke-linejoin="round"/></svg><svg class="a" style="left:310px;top:124px" width="16" height="16" viewBox="0 0 16 16"><path d="M1 8 Q8 1.5 15 8 Q8 14.5 1 8Z" fill="#fff" stroke="#1b2a44" stroke-width="1.5"/><circle cx="8" cy="7.6" r="3" fill="#1b2a44"/></svg><svg class="a" style="left:341px;top:123px" width="16" height="18" viewBox="0 0 16 18"><path d="M4.5 8 V5 A3.5 3.5 0 0 1 11.5 5 V6" fill="none" stroke="#2f8fd8" stroke-width="1.4"/><rect x="2.5" y="8" width="11" height="8.5" rx="1" fill="#fff" stroke="#1b2a44" stroke-width="1.4"/><circle cx="8" cy="11.3" r="1.3" fill="#2f8fd8"/><rect x="7.4" y="11.5" width="1.2" height="3" fill="#2f8fd8"/></svg>
<div class="a" style="left:0;top:144px;width:365px;height:24px;background:#fff"></div>
<div class="a" style="left:0;top:167px;width:365px;height:1px;background:#eeeeee"></div>
<div class="a" style="left:156px;top:144px;width:1px;height:24px;background:#eeeeee"></div>
<div class="a" style="left:211px;top:144px;width:1px;height:24px;background:#eeeeee"></div>
<div class="a" style="left:271px;top:144px;width:1px;height:24px;background:#eeeeee"></div>
<div class="a" style="left:302px;top:144px;width:1px;height:24px;background:#eeeeee"></div>
<div class="a" style="left:333px;top:144px;width:1px;height:24px;background:#eeeeee"></div>
<div class="t" style="left:6.70px;top:147px;font-size:14.86px;">Çerçeve Çapraz</div>
<div class="cb" style="left:179px;top:151px"></div>
<div class="sw" style="left:215px;top:146px;background:#8000ff"></div>
<svg class="a" style="left:278px;top:148px" width="16" height="16" viewBox="0 0 16 16"><path d="M8 1.5 L14 4.5 L14 11.5 L8 14.5 L2 11.5 L2 4.5 Z" fill="#58b4e6" stroke="#1b2a44" stroke-width="1.3" stroke-linejoin="round"/><path d="M2 4.5 L8 7.5 L14 4.5 L8 1.5 Z" fill="#fff" stroke="#1b2a44" stroke-width="1.2" stroke-linejoin="round"/><path d="M8 7.5 L8 14.5" stroke="#1b2a44" stroke-width="1.2"/><path d="M8 7.5 L14 4.5 L14 11.5 L8 14.5Z" fill="#a9d8f2" stroke="#1b2a44" stroke-width="1.2" stroke-linejoin="round"/></svg><svg class="a" style="left:310px;top:148px" width="16" height="16" viewBox="0 0 16 16"><path d="M1 8 Q8 1.5 15 8 Q8 14.5 1 8Z" fill="#fff" stroke="#1b2a44" stroke-width="1.5"/><circle cx="8" cy="7.6" r="3" fill="#1b2a44"/></svg><svg class="a" style="left:341px;top:147px" width="16" height="18" viewBox="0 0 16 18"><path d="M4.5 8 V5 A3.5 3.5 0 0 1 11.5 5 V6" fill="none" stroke="#2f8fd8" stroke-width="1.4"/><rect x="2.5" y="8" width="11" height="8.5" rx="1" fill="#fff" stroke="#1b2a44" stroke-width="1.4"/><circle cx="8" cy="11.3" r="1.3" fill="#2f8fd8"/><rect x="7.4" y="11.5" width="1.2" height="3" fill="#2f8fd8"/></svg>
<div class="a" style="left:0;top:168px;width:365px;height:24px;background:#fff"></div>
<div class="a" style="left:0;top:191px;width:365px;height:1px;background:#eeeeee"></div>
<div class="a" style="left:156px;top:168px;width:1px;height:24px;background:#eeeeee"></div>
<div class="a" style="left:211px;top:168px;width:1px;height:24px;background:#eeeeee"></div>
<div class="a" style="left:271px;top:168px;width:1px;height:24px;background:#eeeeee"></div>
<div class="a" style="left:302px;top:168px;width:1px;height:24px;background:#eeeeee"></div>
<div class="a" style="left:333px;top:168px;width:1px;height:24px;background:#eeeeee"></div>
<div class="t" style="left:6.70px;top:171px;font-size:15.68px;">Ara Kolon</div>
<div class="cb" style="left:179px;top:175px"></div>
<div class="sw" style="left:215px;top:170px;background:#80cc66"></div>
<svg class="a" style="left:278px;top:172px" width="16" height="16" viewBox="0 0 16 16"><path d="M8 1.5 L14 4.5 L14 11.5 L8 14.5 L2 11.5 L2 4.5 Z" fill="#58b4e6" stroke="#1b2a44" stroke-width="1.3" stroke-linejoin="round"/><path d="M2 4.5 L8 7.5 L14 4.5 L8 1.5 Z" fill="#fff" stroke="#1b2a44" stroke-width="1.2" stroke-linejoin="round"/><path d="M8 7.5 L8 14.5" stroke="#1b2a44" stroke-width="1.2"/><path d="M8 7.5 L14 4.5 L14 11.5 L8 14.5Z" fill="#a9d8f2" stroke="#1b2a44" stroke-width="1.2" stroke-linejoin="round"/></svg><svg class="a" style="left:310px;top:172px" width="16" height="16" viewBox="0 0 16 16"><path d="M1 8 Q8 1.5 15 8 Q8 14.5 1 8Z" fill="#fff" stroke="#1b2a44" stroke-width="1.5"/><circle cx="8" cy="7.6" r="3" fill="#1b2a44"/></svg><svg class="a" style="left:341px;top:171px" width="16" height="18" viewBox="0 0 16 18"><path d="M4.5 8 V5 A3.5 3.5 0 0 1 11.5 5 V6" fill="none" stroke="#2f8fd8" stroke-width="1.4"/><rect x="2.5" y="8" width="11" height="8.5" rx="1" fill="#fff" stroke="#1b2a44" stroke-width="1.4"/><circle cx="8" cy="11.3" r="1.3" fill="#2f8fd8"/><rect x="7.4" y="11.5" width="1.2" height="3" fill="#2f8fd8"/></svg>
<div class="a" style="left:0;top:192px;width:365px;height:24px;background:#fff"></div>
<div class="a" style="left:0;top:215px;width:365px;height:1px;background:#eeeeee"></div>
<div class="a" style="left:156px;top:192px;width:1px;height:24px;background:#eeeeee"></div>
<div class="a" style="left:211px;top:192px;width:1px;height:24px;background:#eeeeee"></div>
<div class="a" style="left:271px;top:192px;width:1px;height:24px;background:#eeeeee"></div>
<div class="a" style="left:302px;top:192px;width:1px;height:24px;background:#eeeeee"></div>
<div class="a" style="left:333px;top:192px;width:1px;height:24px;background:#eeeeee"></div>
<div class="t" style="left:5.74px;top:195px;font-size:15.35px;">Kuşaklar</div>
<div class="cb" style="left:179px;top:199px"></div>
<div class="sw" style="left:215px;top:194px;background:#ff4000"></div>
<svg class="a" style="left:278px;top:196px" width="16" height="16" viewBox="0 0 16 16"><path d="M8 1.5 L14 4.5 L14 11.5 L8 14.5 L2 11.5 L2 4.5 Z" fill="#58b4e6" stroke="#1b2a44" stroke-width="1.3" stroke-linejoin="round"/><path d="M2 4.5 L8 7.5 L14 4.5 L8 1.5 Z" fill="#fff" stroke="#1b2a44" stroke-width="1.2" stroke-linejoin="round"/><path d="M8 7.5 L8 14.5" stroke="#1b2a44" stroke-width="1.2"/><path d="M8 7.5 L14 4.5 L14 11.5 L8 14.5Z" fill="#a9d8f2" stroke="#1b2a44" stroke-width="1.2" stroke-linejoin="round"/></svg><svg class="a" style="left:310px;top:196px" width="16" height="16" viewBox="0 0 16 16"><path d="M1 8 Q8 1.5 15 8 Q8 14.5 1 8Z" fill="#fff" stroke="#1b2a44" stroke-width="1.5"/><circle cx="8" cy="7.6" r="3" fill="#1b2a44"/></svg><svg class="a" style="left:341px;top:195px" width="16" height="18" viewBox="0 0 16 18"><path d="M4.5 8 V5 A3.5 3.5 0 0 1 11.5 5 V6" fill="none" stroke="#2f8fd8" stroke-width="1.4"/><rect x="2.5" y="8" width="11" height="8.5" rx="1" fill="#fff" stroke="#1b2a44" stroke-width="1.4"/><circle cx="8" cy="11.3" r="1.3" fill="#2f8fd8"/><rect x="7.4" y="11.5" width="1.2" height="3" fill="#2f8fd8"/></svg>
<div class="a" style="left:0;top:216px;width:365px;height:24px;background:#fff"></div>
<div class="a" style="left:0;top:239px;width:365px;height:1px;background:#eeeeee"></div>
<div class="a" style="left:156px;top:216px;width:1px;height:24px;background:#eeeeee"></div>
<div class="a" style="left:211px;top:216px;width:1px;height:24px;background:#eeeeee"></div>
<div class="a" style="left:271px;top:216px;width:1px;height:24px;background:#eeeeee"></div>
<div class="a" style="left:302px;top:216px;width:1px;height:24px;background:#eeeeee"></div>
<div class="a" style="left:333px;top:216px;width:1px;height:24px;background:#eeeeee"></div>
<div class="t" style="left:6.70px;top:219px;font-size:15.25px;">Ara Makas</div>
<div class="cb" style="left:179px;top:223px"></div>
<div class="sw" style="left:215px;top:218px;background:#7a3c00"></div>
<svg class="a" style="left:278px;top:220px" width="16" height="16" viewBox="0 0 16 16"><path d="M8 1.5 L14 4.5 L14 11.5 L8 14.5 L2 11.5 L2 4.5 Z" fill="#58b4e6" stroke="#1b2a44" stroke-width="1.3" stroke-linejoin="round"/><path d="M2 4.5 L8 7.5 L14 4.5 L8 1.5 Z" fill="#fff" stroke="#1b2a44" stroke-width="1.2" stroke-linejoin="round"/><path d="M8 7.5 L8 14.5" stroke="#1b2a44" stroke-width="1.2"/><path d="M8 7.5 L14 4.5 L14 11.5 L8 14.5Z" fill="#a9d8f2" stroke="#1b2a44" stroke-width="1.2" stroke-linejoin="round"/></svg><svg class="a" style="left:310px;top:220px" width="16" height="16" viewBox="0 0 16 16"><path d="M1 8 Q8 1.5 15 8 Q8 14.5 1 8Z" fill="#fff" stroke="#1b2a44" stroke-width="1.5"/><circle cx="8" cy="7.6" r="3" fill="#1b2a44"/></svg><svg class="a" style="left:341px;top:219px" width="16" height="18" viewBox="0 0 16 18"><path d="M4.5 8 V5 A3.5 3.5 0 0 1 11.5 5 V6" fill="none" stroke="#2f8fd8" stroke-width="1.4"/><rect x="2.5" y="8" width="11" height="8.5" rx="1" fill="#fff" stroke="#1b2a44" stroke-width="1.4"/><circle cx="8" cy="11.3" r="1.3" fill="#2f8fd8"/><rect x="7.4" y="11.5" width="1.2" height="3" fill="#2f8fd8"/></svg>
</div>
<div class="a" style="left:366px;top:228px;width:16px;height:263px;background:#f0f0f0"></div>
<svg class="a" style="left:368px;top:230px" width="12" height="12" viewBox="-6 -6 12 12"><path d="M-3.8 1.9 L0 -1.9 L3.8 1.9" fill="none" stroke="#555" stroke-width="2.1"/></svg>
<div class="a" style="left:367px;top:243px;width:14px;height:172px;background:#cdcdcd"></div>
<svg class="a" style="left:368px;top:477px" width="12" height="12" viewBox="-6 -6 12 12"><path d="M-3.8 -1.9 L0 1.9 L3.8 -1.9" fill="none" stroke="#555" stroke-width="2.1"/></svg>
<div class="a" style="left:184px;top:494px;width:14px;height:2px;border-top:2px dotted #aaa"></div>
<div class="a" style="left:0;top:499px;width:382px;height:26px;background:#d9d9d9"></div>
<div class="t" style="left:6.25px;top:502px;font-size:15.29px;">Categories</div>
<div class="a" style="left:0;top:525px;width:365px;height:28px;background:#f0f0f0;border-bottom:1px solid #e2e2e2"></div>
<div class="a" style="left:302px;top:527px;width:1px;height:24px;background:#dcdcdc"></div>
<div class="a" style="left:333px;top:527px;width:1px;height:24px;background:#dcdcdc"></div>
<div class="t" style="left:5.76px;top:530px;font-size:15.12px;">Reference</div>
<div class="a" style="left:0;top:554px;width:365px;height:139px;overflow:hidden">
<div class="a" style="left:0;top:0px;width:365px;height:24px;background:#f3f3f3"></div>
<div class="a" style="left:0;top:23px;width:365px;height:1px;background:#eeeeee"></div>
<div class="a" style="left:302px;top:0px;width:1px;height:24px;background:#eeeeee"></div>
<div class="a" style="left:333px;top:0px;width:1px;height:24px;background:#eeeeee"></div>
<div class="t" style="left:5.71px;top:2px;font-size:15.88px;">Nodes</div>
<svg class="a" style="left:310px;top:4px" width="16" height="16" viewBox="0 0 16 16"><path d="M1 8 Q8 1.5 15 8 Q8 14.5 1 8Z" fill="#fff" stroke="#1b2a44" stroke-width="1.5"/><circle cx="8" cy="7.6" r="3" fill="#1b2a44"/></svg><svg class="a" style="left:341px;top:3px" width="16" height="18" viewBox="0 0 16 18"><path d="M4.5 8 V5 A3.5 3.5 0 0 1 11.5 5 V6" fill="none" stroke="#2f8fd8" stroke-width="1.4"/><rect x="2.5" y="8" width="11" height="8.5" rx="1" fill="#fff" stroke="#1b2a44" stroke-width="1.4"/><circle cx="8" cy="11.3" r="1.3" fill="#2f8fd8"/><rect x="7.4" y="11.5" width="1.2" height="3" fill="#2f8fd8"/></svg>
<div class="a" style="left:0;top:24px;width:365px;height:24px;background:#fff"></div>
<div class="a" style="left:0;top:47px;width:365px;height:1px;background:#eeeeee"></div>
<div class="a" style="left:302px;top:24px;width:1px;height:24px;background:#eeeeee"></div>
<div class="a" style="left:333px;top:24px;width:1px;height:24px;background:#eeeeee"></div>
<div class="t" style="left:6px;top:26px">Bars</div>
<svg class="a" style="left:310px;top:28px" width="16" height="16" viewBox="0 0 16 16"><path d="M1 8 Q8 1.5 15 8 Q8 14.5 1 8Z" fill="#fff" stroke="#1b2a44" stroke-width="1.5"/><circle cx="8" cy="7.6" r="3" fill="#1b2a44"/></svg><svg class="a" style="left:341px;top:27px" width="16" height="18" viewBox="0 0 16 18"><path d="M4.5 8 V5 A3.5 3.5 0 0 1 11.5 5 V6" fill="none" stroke="#2f8fd8" stroke-width="1.4"/><rect x="2.5" y="8" width="11" height="8.5" rx="1" fill="#fff" stroke="#1b2a44" stroke-width="1.4"/><circle cx="8" cy="11.3" r="1.3" fill="#2f8fd8"/><rect x="7.4" y="11.5" width="1.2" height="3" fill="#2f8fd8"/></svg>
<div class="a" style="left:0;top:48px;width:365px;height:24px;background:#fff"></div>
<div class="a" style="left:0;top:71px;width:365px;height:1px;background:#eeeeee"></div>
<div class="a" style="left:302px;top:48px;width:1px;height:24px;background:#eeeeee"></div>
<div class="a" style="left:333px;top:48px;width:1px;height:24px;background:#eeeeee"></div>
<div class="t" style="left:6px;top:50px">Ties</div>
<svg class="a" style="left:310px;top:52px" width="16" height="16" viewBox="0 0 16 16"><path d="M1 8 Q8 1.5 15 8 Q8 14.5 1 8Z" fill="#fff" stroke="#1b2a44" stroke-width="1.5"/><circle cx="8" cy="7.6" r="3" fill="#1b2a44"/></svg><svg class="a" style="left:341px;top:51px" width="16" height="18" viewBox="0 0 16 18"><path d="M4.5 8 V5 A3.5 3.5 0 0 1 11.5 5 V6" fill="none" stroke="#2f8fd8" stroke-width="1.4"/><rect x="2.5" y="8" width="11" height="8.5" rx="1" fill="#fff" stroke="#1b2a44" stroke-width="1.4"/><circle cx="8" cy="11.3" r="1.3" fill="#2f8fd8"/><rect x="7.4" y="11.5" width="1.2" height="3" fill="#2f8fd8"/></svg>
<div class="a" style="left:0;top:72px;width:365px;height:24px;background:#fff"></div>
<div class="a" style="left:0;top:95px;width:365px;height:1px;background:#eeeeee"></div>
<div class="a" style="left:302px;top:72px;width:1px;height:24px;background:#eeeeee"></div>
<div class="a" style="left:333px;top:72px;width:1px;height:24px;background:#eeeeee"></div>
<div class="t" style="left:6px;top:74px">Columns</div>
<svg class="a" style="left:310px;top:76px" width="16" height="16" viewBox="0 0 16 16"><path d="M1 8 Q8 1.5 15 8 Q8 14.5 1 8Z" fill="#fff" stroke="#1b2a44" stroke-width="1.5"/><circle cx="8" cy="7.6" r="3" fill="#1b2a44"/></svg><svg class="a" style="left:341px;top:75px" width="16" height="18" viewBox="0 0 16 18"><path d="M4.5 8 V5 A3.5 3.5 0 0 1 11.5 5 V6" fill="none" stroke="#2f8fd8" stroke-width="1.4"/><rect x="2.5" y="8" width="11" height="8.5" rx="1" fill="#fff" stroke="#1b2a44" stroke-width="1.4"/><circle cx="8" cy="11.3" r="1.3" fill="#2f8fd8"/><rect x="7.4" y="11.5" width="1.2" height="3" fill="#2f8fd8"/></svg>
<div class="a" style="left:0;top:96px;width:365px;height:24px;background:#fff"></div>
<div class="a" style="left:0;top:119px;width:365px;height:1px;background:#eeeeee"></div>
<div class="a" style="left:302px;top:96px;width:1px;height:24px;background:#eeeeee"></div>
<div class="a" style="left:333px;top:96px;width:1px;height:24px;background:#eeeeee"></div>
<div class="t" style="left:6px;top:98px">Beams</div>
<svg class="a" style="left:310px;top:100px" width="16" height="16" viewBox="0 0 16 16"><path d="M1 8 Q8 1.5 15 8 Q8 14.5 1 8Z" fill="#fff" stroke="#1b2a44" stroke-width="1.5"/><circle cx="8" cy="7.6" r="3" fill="#1b2a44"/></svg><svg class="a" style="left:341px;top:99px" width="16" height="18" viewBox="0 0 16 18"><path d="M4.5 8 V5 A3.5 3.5 0 0 1 11.5 5 V6" fill="none" stroke="#2f8fd8" stroke-width="1.4"/><rect x="2.5" y="8" width="11" height="8.5" rx="1" fill="#fff" stroke="#1b2a44" stroke-width="1.4"/><circle cx="8" cy="11.3" r="1.3" fill="#2f8fd8"/><rect x="7.4" y="11.5" width="1.2" height="3" fill="#2f8fd8"/></svg>
<div class="a" style="left:0;top:120px;width:365px;height:24px;background:#fff"></div>
<div class="a" style="left:0;top:143px;width:365px;height:1px;background:#eeeeee"></div>
<div class="a" style="left:302px;top:120px;width:1px;height:24px;background:#eeeeee"></div>
<div class="a" style="left:333px;top:120px;width:1px;height:24px;background:#eeeeee"></div>
<div class="t" style="left:6px;top:122px">Panels</div>
<svg class="a" style="left:310px;top:124px" width="16" height="16" viewBox="0 0 16 16"><path d="M1 8 Q8 1.5 15 8 Q8 14.5 1 8Z" fill="#fff" stroke="#1b2a44" stroke-width="1.5"/><circle cx="8" cy="7.6" r="3" fill="#1b2a44"/></svg><svg class="a" style="left:341px;top:123px" width="16" height="18" viewBox="0 0 16 18"><path d="M4.5 8 V5 A3.5 3.5 0 0 1 11.5 5 V6" fill="none" stroke="#2f8fd8" stroke-width="1.4"/><rect x="2.5" y="8" width="11" height="8.5" rx="1" fill="#fff" stroke="#1b2a44" stroke-width="1.4"/><circle cx="8" cy="11.3" r="1.3" fill="#2f8fd8"/><rect x="7.4" y="11.5" width="1.2" height="3" fill="#2f8fd8"/></svg>
</div>
<svg class="a" style="left:368px;top:526px" width="12" height="12" viewBox="-6 -6 12 12"><path d="M-3.8 1.9 L0 -1.9 L3.8 1.9" fill="none" stroke="#555" stroke-width="2.1"/></svg>
<div class="a" style="left:367px;top:543px;width:14px;height:95px;background:#cdcdcd"></div>
<svg class="a" style="left:368px;top:679px" width="12" height="12" viewBox="-6 -6 12 12"><path d="M-3.8 -1.9 L0 1.9 L3.8 -1.9" fill="none" stroke="#555" stroke-width="2.1"/></svg>
<div class="a" style="left:385px;top:596px;width:2px;height:14px;border-left:2px dotted #aaa"></div>
<div class="cb" style="left:3px;top:709px"></div><svg class="a" style="left:3px;top:709px" width="12" height="12" viewBox="0 0 12 12"><path d="M2.5 6 L5 8.5 L9.5 3" fill="none" stroke="#000" stroke-width="1.8"/></svg>
<div class="t" style="left:19.62px;top:704px;font-size:15.62px;">Represent the structure using layer colours</div>
<div class="t" style="left:2.44px;top:737px;font-size:15.39px;">Elements considered in the analysis</div>
<div class="a" style="left:255px;top:731px;width:122px;height:30px;background:#fff;border:1px solid #6d6d6d;box-sizing:border-box"></div>
<div class="a" style="left:258px;top:734px;width:100px;height:24px;border:1px solid #d0d0d0;box-sizing:border-box"></div>
<div class="t" style="left:261.00px;top:737px;font-size:15.33px;">Stress / Strain</div>
<svg class="a" style="left:363px;top:741px" width="12" height="12" viewBox="-6 -6 12 12"><path d="M-3.8 -1.9 L0 1.9 L3.8 -1.9" fill="none" stroke="#444" stroke-width="2.1"/></svg>
<div class="a" style="left:184px;top:768px;width:14px;height:2px;border-top:2px dotted #aaa"></div>
<div class="a" style="left:0;top:774px;width:382px;height:26px;background:#d9d9d9"></div>
<div class="t" style="left:3px;top:777px">View options</div>
<svg class="a" style="left:345px;top:781px" width="12" height="12" viewBox="-6 -6 12 12"><path d="M-5 -2.5 L0 2.5 L5 -2.5" fill="none" stroke="#000" stroke-width="2.4"/></svg>
<svg class="a" style="left:365px;top:780px" width="14" height="14" viewBox="0 0 14 14"><path d="M2 2 L12 12 M12 2 L2 12" stroke="#000" stroke-width="1.6"/></svg>
<div class="cb" style="left:25px;top:808px"></div><svg class="a" style="left:25px;top:808px" width="12" height="12" viewBox="0 0 12 12"><path d="M2.5 6 L5 8.5 L9.5 3" fill="none" stroke="#000" stroke-width="1.8"/></svg>
<div class="t" style="left:41.49px;top:803px;font-size:16.15px;">Display element information</div>
<div class="cb" style="left:25px;top:835px"></div><svg class="a" style="left:25px;top:835px" width="12" height="12" viewBox="0 0 12 12"><path d="M2.5 6 L5 8.5 L9.5 3" fill="none" stroke="#000" stroke-width="1.8"/></svg>
<div class="t" style="left:41.53px;top:830px;font-size:15.50px;">Display texts on the elements</div>
<div class="cb" style="left:25px;top:862px"></div><svg class="a" style="left:25px;top:862px" width="12" height="12" viewBox="0 0 12 12"><path d="M2.5 6 L5 8.5 L9.5 3" fill="none" stroke="#000" stroke-width="1.8"/></svg>
<div class="t" style="left:41.54px;top:857px;font-size:15.42px;">Display the local axes of the elements</div>
<div class="cb" style="left:25px;top:889px"></div>
<div class="t" style="left:41.49px;top:884px;font-size:16.16px;">Draw shells with fill</div>
<div class="cb" style="left:25px;top:916px"></div><svg class="a" style="left:25px;top:916px" width="12" height="12" viewBox="0 0 12 12"><path d="M2.5 6 L5 8.5 L9.5 3" fill="none" stroke="#000" stroke-width="1.8"/></svg>
<div class="t" style="left:41.48px;top:911px;font-size:16.24px;">Draw loads with fill</div>
<svg class="a" style="left:3px;top:806px" width="16" height="16" viewBox="0 0 16 16"><rect x="1" y="1.5" width="14" height="9" rx="2" fill="#dff0fb" stroke="#1b2a44" stroke-width="1.2"/><path d="M4 4.5 H12 M4 7 H10" stroke="#2f8fd8" stroke-width="1"/><path d="M5 10.5 L5 14 L8.5 10.5" fill="#dff0fb" stroke="#1b2a44" stroke-width="1.2"/></svg>
<div class="t" style="left:3px;top:830px;font-family:'Liberation Serif',serif;font-weight:bold;font-size:21px;color:#1b2a44;line-height:22px">T</div>
<svg class="a" style="left:2px;top:859px" width="18" height="18" viewBox="0 0 18 18"><path d="M9 2 V9 L2 15 M9 9 L16 12" stroke="#1b2a44" stroke-width="1.2" fill="none"/><path d="M1 1 L3 3 M16 1 L14 3 M16 16 L14 14" stroke="#2f8fd8" stroke-width="1.2"/></svg>
<svg class="a" style="left:2px;top:886px" width="18" height="18" viewBox="0 0 18 18"><rect x="2" y="2" width="14" height="14" fill="#dce7f0" stroke="#1b2a44" stroke-width="1.2"/><path d="M9 2 V16" stroke="#1b2a44" stroke-dasharray="2 2"/><rect x="0.5" y="0.5" width="3" height="3" fill="#2f8fd8"/><rect x="14.5" y="0.5" width="3" height="3" fill="#2f8fd8"/><rect x="0.5" y="14.5" width="3" height="3" fill="#2f8fd8"/><rect x="14.5" y="14.5" width="3" height="3" fill="#2f8fd8"/></svg>
<svg class="a" style="left:2px;top:913px" width="18" height="18" viewBox="0 0 18 18"><path d="M2 2 V15 M6 2 V15 M10 2 V15 M14 2 V15 M2 2 H6 M10 2 H14" stroke="#e03c3c" stroke-width="1.5" fill="none"/><path d="M2 15 L4 17 L6 15 M10 15 L12 17 L14 15" stroke="#e03c3c" stroke-width="1.2" fill="none"/></svg>
<div class="t" style="left:23.52px;top:943px;font-size:15.74px;">Dimensions of the nodes</div>
<div class="a" style="left:247px;top:938px;width:88px;height:31px;background:#fff;border:1px solid #7a7a7a;box-sizing:border-box"></div>
<div class="t" style="left:250px;top:943px;width:79px;text-align:right">15.0</div>
<div class="t" style="left:341.00px;top:944px;font-size:16.00px;">cm</div>
<div class="t" style="left:24.50px;top:981px;font-size:14.50px;">Text size</div>
<div class="a" style="left:247px;top:975px;width:88px;height:31px;background:#fff;border:1px solid #7a7a7a;box-sizing:border-box"></div>
<div class="t" style="left:289.01px;top:980px;font-size:15.86px;text-align:right">100.0</div>
<div class="t" style="left:341px;top:981px">%</div>
<div class="a" style="left:0;top:1012px;width:366px;height:12px;overflow:hidden"><div class="a" style="left:205px;top:0;width:130px;height:30px;background:#fff;border:1px solid #7a7a7a;box-sizing:border-box"></div><div class="t" style="left:24px;top:6px">Tooltip position</div><div class="t" style="left:211px;top:5px">In elements  ...</div></div>
<svg class="a" style="left:368px;top:803px" width="12" height="12" viewBox="-6 -6 12 12"><path d="M-3.8 1.9 L0 -1.9 L3.8 1.9" fill="none" stroke="#555" stroke-width="2.1"/></svg>
<div class="a" style="left:367px;top:817px;width:14px;height:177px;background:#cdcdcd"></div>
<svg class="a" style="left:368px;top:1012px" width="12" height="12" viewBox="-6 -6 12 12"><path d="M-3.8 -1.9 L0 1.9 L3.8 -1.9" fill="none" stroke="#555" stroke-width="2.1"/></svg>

<!-- ===== Work area ===== -->
<div class="a" style="left:390px;top:176px;width:1530px;height:26px;background:#d9d9d9"></div>
<div class="t" style="left:393.50px;top:179px;font-size:15.48px;">Work area</div>
<div class="a" style="left:390px;top:202px;width:1530px;height:26px;background:#a2b6cf"></div>
<div class="t" style="left:414.60px;top:205px;font-size:16.08px;">3D</div>
<div class="a" style="left:390px;top:228px;width:24px;height:799px;background:#f0f0f0"></div>
<div class="a" style="left:414px;top:228px;width:1506px;height:799px;background:#fff;overflow:hidden">
<svg style="left:-414px;top:-228px" width="1920" height="1080" viewBox="0 0 1920 1080"><line x1="513.4" y1="774.7" x2="818.1" y2="996.3" stroke="#c6c6c6" stroke-width="1" stroke-dasharray="10 8"/><line x1="663.2" y1="734.7" x2="968.0" y2="956.3" stroke="#c6c6c6" stroke-width="1" stroke-dasharray="10 8"/><line x1="813.1" y1="694.7" x2="1117.8" y2="916.3" stroke="#c6c6c6" stroke-width="1" stroke-dasharray="10 8"/><line x1="963.0" y1="654.7" x2="1267.7" y2="876.3" stroke="#c6c6c6" stroke-width="1" stroke-dasharray="10 8"/><line x1="1112.8" y1="614.7" x2="1417.6" y2="836.3" stroke="#c6c6c6" stroke-width="1" stroke-dasharray="10 8"/><line x1="1262.7" y1="574.7" x2="1567.4" y2="796.3" stroke="#c6c6c6" stroke-width="1" stroke-dasharray="10 8"/><line x1="1412.5" y1="534.7" x2="1717.3" y2="756.3" stroke="#c6c6c6" stroke-width="1" stroke-dasharray="10 8"/><line x1="1562.4" y1="494.7" x2="1867.1" y2="716.3" stroke="#c6c6c6" stroke-width="1" stroke-dasharray="10 8"/><line x1="514.5" y1="783.0" x2="1578.5" y2="499.0" stroke="#c6c6c6" stroke-width="1" stroke-dasharray="10 8"/><line x1="586.4" y1="835.2" x2="1650.4" y2="551.2" stroke="#c6c6c6" stroke-width="1" stroke-dasharray="10 8"/><line x1="658.3" y1="887.5" x2="1722.3" y2="603.5" stroke="#c6c6c6" stroke-width="1" stroke-dasharray="10 8"/><line x1="730.1" y1="939.8" x2="1794.1" y2="655.8" stroke="#c6c6c6" stroke-width="1" stroke-dasharray="10 8"/><line x1="802.0" y1="992.0" x2="1866.0" y2="708.0" stroke="#c6c6c6" stroke-width="1" stroke-dasharray="10 8"/><line x1="809.5" y1="990.0" x2="816.7" y2="994.8" stroke="#ff30ff" stroke-width="1"/><ellipse cx="821.5" cy="998.0" rx="6.5" ry="3.5" fill="none" stroke="#ff30ff" stroke-width="1.2"/><line x1="959.4" y1="950.0" x2="966.6" y2="954.8" stroke="#ff30ff" stroke-width="1"/><ellipse cx="971.4" cy="958.0" rx="6.5" ry="3.5" fill="none" stroke="#ff30ff" stroke-width="1.2"/><line x1="1109.2" y1="910.0" x2="1116.4" y2="914.8" stroke="#ff30ff" stroke-width="1"/><ellipse cx="1121.2" cy="918.0" rx="6.5" ry="3.5" fill="none" stroke="#ff30ff" stroke-width="1.2"/><line x1="1259.1" y1="870.0" x2="1266.3" y2="874.8" stroke="#ff30ff" stroke-width="1"/><ellipse cx="1271.1" cy="878.0" rx="6.5" ry="3.5" fill="none" stroke="#ff30ff" stroke-width="1.2"/><line x1="1408.9" y1="830.0" x2="1416.1" y2="834.8" stroke="#ff30ff" stroke-width="1"/><ellipse cx="1420.9" cy="838.0" rx="6.5" ry="3.5" fill="none" stroke="#ff30ff" stroke-width="1.2"/><line x1="1558.8" y1="790.0" x2="1566.0" y2="794.8" stroke="#ff30ff" stroke-width="1"/><ellipse cx="1570.8" cy="798.0" rx="6.5" ry="3.5" fill="none" stroke="#ff30ff" stroke-width="1.2"/><line x1="1708.7" y1="750.0" x2="1715.9" y2="754.8" stroke="#ff30ff" stroke-width="1"/><ellipse cx="1720.7" cy="758.0" rx="6.5" ry="3.5" fill="none" stroke="#ff30ff" stroke-width="1.2"/><line x1="1858.5" y1="710.0" x2="1865.7" y2="714.8" stroke="#ff30ff" stroke-width="1"/><ellipse cx="1870.5" cy="718.0" rx="6.5" ry="3.5" fill="none" stroke="#ff30ff" stroke-width="1.2"/><line x1="522.0" y1="781.0" x2="510.0" y2="784.0" stroke="#ff30ff" stroke-width="1"/><ellipse cx="502.0" cy="786.0" rx="6.5" ry="3.5" fill="none" stroke="#ff30ff" stroke-width="1.2"/><line x1="589.6" y1="830.1" x2="578.8" y2="834.3" stroke="#ff30ff" stroke-width="1"/><ellipse cx="571.6" cy="837.1" rx="6.5" ry="3.5" fill="none" stroke="#ff30ff" stroke-width="1.2"/><line x1="665.8" y1="885.5" x2="653.8" y2="888.5" stroke="#ff30ff" stroke-width="1"/><ellipse cx="645.8" cy="890.5" rx="6.5" ry="3.5" fill="none" stroke="#ff30ff" stroke-width="1.2"/><line x1="740.5" y1="939.8" x2="729.7" y2="943.4" stroke="#ff30ff" stroke-width="1"/><ellipse cx="722.5" cy="945.8" rx="6.5" ry="3.5" fill="none" stroke="#ff30ff" stroke-width="1.2"/><line x1="809.5" y1="990.0" x2="797.5" y2="993.6" stroke="#ff30ff" stroke-width="1"/><ellipse cx="789.5" cy="996.0" rx="6.5" ry="3.5" fill="none" stroke="#ff30ff" stroke-width="1.2"/><line x1="522.0" y1="557.3" x2="671.9" y2="614.7" stroke="#6d00d8" stroke-width="5"/><line x1="522.0" y1="654.7" x2="671.9" y2="517.3" stroke="#6d00d8" stroke-width="5"/><line x1="522.0" y1="664.4" x2="671.9" y2="731.4" stroke="#6d00d8" stroke-width="5"/><line x1="522.0" y1="771.4" x2="671.9" y2="624.4" stroke="#6d00d8" stroke-width="5"/><line x1="821.7" y1="477.3" x2="971.6" y2="534.7" stroke="#6d00d8" stroke-width="5"/><line x1="821.7" y1="574.7" x2="971.6" y2="437.3" stroke="#6d00d8" stroke-width="5"/><line x1="821.7" y1="584.4" x2="971.6" y2="651.4" stroke="#6d00d8" stroke-width="5"/><line x1="821.7" y1="691.4" x2="971.6" y2="544.4" stroke="#6d00d8" stroke-width="5"/><line x1="1121.4" y1="397.3" x2="1271.3" y2="454.7" stroke="#6d00d8" stroke-width="5"/><line x1="1121.4" y1="494.7" x2="1271.3" y2="357.3" stroke="#6d00d8" stroke-width="5"/><line x1="1121.4" y1="504.4" x2="1271.3" y2="571.4" stroke="#6d00d8" stroke-width="5"/><line x1="1121.4" y1="611.4" x2="1271.3" y2="464.4" stroke="#6d00d8" stroke-width="5"/><line x1="1421.2" y1="317.3" x2="1571.0" y2="374.7" stroke="#6d00d8" stroke-width="5"/><line x1="1421.2" y1="414.7" x2="1571.0" y2="277.3" stroke="#6d00d8" stroke-width="5"/><line x1="1421.2" y1="424.4" x2="1571.0" y2="491.4" stroke="#6d00d8" stroke-width="5"/><line x1="1421.2" y1="531.4" x2="1571.0" y2="384.4" stroke="#6d00d8" stroke-width="5"/><line x1="522.0" y1="659.5" x2="1571.0" y2="379.5" stroke="#6d00d8" stroke-width="5"/><line x1="514.5" y1="562.5" x2="1578.5" y2="278.5" stroke="#ff4a10" stroke-width="1.1"/><line x1="514.5" y1="568.8" x2="1578.5" y2="284.7" stroke="#4a10a0" stroke-width="1"/><line x1="514.5" y1="566.5" x2="1578.5" y2="282.5" stroke="#9c2400" stroke-width="4"/><line x1="514.5" y1="589.0" x2="1578.5" y2="305.0" stroke="#ff4a10" stroke-width="1.1"/><line x1="514.5" y1="595.2" x2="1578.5" y2="311.2" stroke="#4a10a0" stroke-width="1"/><line x1="514.5" y1="593.0" x2="1578.5" y2="309.0" stroke="#9c2400" stroke-width="4"/><line x1="514.5" y1="615.5" x2="1578.5" y2="331.5" stroke="#ff4a10" stroke-width="1.1"/><line x1="514.5" y1="621.7" x2="1578.5" y2="337.7" stroke="#4a10a0" stroke-width="1"/><line x1="514.5" y1="619.5" x2="1578.5" y2="335.5" stroke="#9c2400" stroke-width="4"/><line x1="514.5" y1="641.9" x2="1578.5" y2="357.9" stroke="#ff4a10" stroke-width="1.1"/><line x1="514.5" y1="648.1" x2="1578.5" y2="364.1" stroke="#4a10a0" stroke-width="1"/><line x1="514.5" y1="645.9" x2="1578.5" y2="361.9" stroke="#9c2400" stroke-width="4"/><line x1="522.0" y1="781.0" x2="522.0" y2="540.5" stroke="#0a7be6" stroke-width="13"/><line x1="520.0" y1="781.0" x2="520.0" y2="540.5" stroke="#0057b0" stroke-width="1"/><line x1="524.0" y1="781.0" x2="524.0" y2="540.5" stroke="#0057b0" stroke-width="1"/><line x1="671.9" y1="741.0" x2="671.9" y2="500.5" stroke="#0a7be6" stroke-width="13"/><line x1="669.9" y1="741.0" x2="669.9" y2="500.5" stroke="#0057b0" stroke-width="1"/><line x1="673.9" y1="741.0" x2="673.9" y2="500.5" stroke="#0057b0" stroke-width="1"/><line x1="821.7" y1="701.0" x2="821.7" y2="460.5" stroke="#0a7be6" stroke-width="13"/><line x1="819.7" y1="701.0" x2="819.7" y2="460.5" stroke="#0057b0" stroke-width="1"/><line x1="823.7" y1="701.0" x2="823.7" y2="460.5" stroke="#0057b0" stroke-width="1"/><line x1="971.6" y1="661.0" x2="971.6" y2="420.5" stroke="#0a7be6" stroke-width="13"/><line x1="969.6" y1="661.0" x2="969.6" y2="420.5" stroke="#0057b0" stroke-width="1"/><line x1="973.6" y1="661.0" x2="973.6" y2="420.5" stroke="#0057b0" stroke-width="1"/><line x1="1121.4" y1="621.0" x2="1121.4" y2="380.5" stroke="#0a7be6" stroke-width="13"/><line x1="1119.4" y1="621.0" x2="1119.4" y2="380.5" stroke="#0057b0" stroke-width="1"/><line x1="1123.4" y1="621.0" x2="1123.4" y2="380.5" stroke="#0057b0" stroke-width="1"/><line x1="1271.3" y1="581.0" x2="1271.3" y2="340.5" stroke="#0a7be6" stroke-width="13"/><line x1="1269.3" y1="581.0" x2="1269.3" y2="340.5" stroke="#0057b0" stroke-width="1"/><line x1="1273.3" y1="581.0" x2="1273.3" y2="340.5" stroke="#0057b0" stroke-width="1"/><line x1="1421.2" y1="541.0" x2="1421.2" y2="300.5" stroke="#0a7be6" stroke-width="13"/><line x1="1419.2" y1="541.0" x2="1419.2" y2="300.5" stroke="#0057b0" stroke-width="1"/><line x1="1423.2" y1="541.0" x2="1423.2" y2="300.5" stroke="#0057b0" stroke-width="1"/><line x1="1571.0" y1="501.0" x2="1571.0" y2="260.5" stroke="#0a7be6" stroke-width="13"/><line x1="1569.0" y1="501.0" x2="1569.0" y2="260.5" stroke="#0057b0" stroke-width="1"/><line x1="1573.0" y1="501.0" x2="1573.0" y2="260.5" stroke="#0057b0" stroke-width="1"/><line x1="1571.0" y1="272.5" x2="1638.6" y2="538.1" stroke="#6d00d8" stroke-width="5"/><line x1="1571.0" y1="489.0" x2="1638.6" y2="321.6" stroke="#6d00d8" stroke-width="5"/><line x1="1789.5" y1="431.4" x2="1858.5" y2="698.0" stroke="#6d00d8" stroke-width="5"/><line x1="1789.5" y1="647.8" x2="1858.5" y2="481.5" stroke="#6d00d8" stroke-width="5"/><line x1="1638.6" y1="417.8" x2="1638.6" y2="390.2" stroke="#8a4a30" stroke-width="5"/><line x1="1638.6" y1="417.8" x2="1638.6" y2="390.2" stroke="#c8866a" stroke-width="3"/><line x1="1638.6" y1="417.8" x2="1652.3" y2="400.2" stroke="#8a4a30" stroke-width="5"/><line x1="1638.6" y1="417.8" x2="1652.3" y2="400.2" stroke="#d09070" stroke-width="3"/><line x1="1652.3" y1="427.8" x2="1652.3" y2="400.2" stroke="#8a4a30" stroke-width="5"/><line x1="1652.3" y1="427.8" x2="1652.3" y2="400.2" stroke="#c8866a" stroke-width="3"/><line x1="1652.3" y1="427.8" x2="1666.0" y2="410.1" stroke="#8a4a30" stroke-width="5"/><line x1="1652.3" y1="427.8" x2="1666.0" y2="410.1" stroke="#d09070" stroke-width="3"/><line x1="1666.0" y1="437.8" x2="1666.0" y2="410.1" stroke="#8a4a30" stroke-width="5"/><line x1="1666.0" y1="437.8" x2="1666.0" y2="410.1" stroke="#c8866a" stroke-width="3"/><line x1="1666.0" y1="437.8" x2="1679.7" y2="420.1" stroke="#8a4a30" stroke-width="5"/><line x1="1666.0" y1="437.8" x2="1679.7" y2="420.1" stroke="#d09070" stroke-width="3"/><line x1="1679.7" y1="447.8" x2="1679.7" y2="420.1" stroke="#8a4a30" stroke-width="5"/><line x1="1679.7" y1="447.8" x2="1679.7" y2="420.1" stroke="#c8866a" stroke-width="3"/><line x1="1679.7" y1="447.8" x2="1693.5" y2="430.1" stroke="#8a4a30" stroke-width="5"/><line x1="1679.7" y1="447.8" x2="1693.5" y2="430.1" stroke="#d09070" stroke-width="3"/><line x1="1693.5" y1="457.7" x2="1693.5" y2="430.1" stroke="#8a4a30" stroke-width="5"/><line x1="1693.5" y1="457.7" x2="1693.5" y2="430.1" stroke="#c8866a" stroke-width="3"/><line x1="1693.5" y1="457.7" x2="1707.2" y2="440.1" stroke="#8a4a30" stroke-width="5"/><line x1="1693.5" y1="457.7" x2="1707.2" y2="440.1" stroke="#d09070" stroke-width="3"/><line x1="1707.2" y1="467.7" x2="1707.2" y2="440.1" stroke="#8a4a30" stroke-width="5"/><line x1="1707.2" y1="467.7" x2="1707.2" y2="440.1" stroke="#c8866a" stroke-width="3"/><line x1="1707.2" y1="467.7" x2="1720.9" y2="450.0" stroke="#8a4a30" stroke-width="5"/><line x1="1707.2" y1="467.7" x2="1720.9" y2="450.0" stroke="#d09070" stroke-width="3"/><line x1="1720.9" y1="477.7" x2="1720.9" y2="450.0" stroke="#8a4a30" stroke-width="5"/><line x1="1720.9" y1="477.7" x2="1720.9" y2="450.0" stroke="#c8866a" stroke-width="3"/><line x1="1720.9" y1="477.7" x2="1734.6" y2="460.0" stroke="#8a4a30" stroke-width="5"/><line x1="1720.9" y1="477.7" x2="1734.6" y2="460.0" stroke="#d09070" stroke-width="3"/><line x1="1734.6" y1="487.7" x2="1734.6" y2="460.0" stroke="#8a4a30" stroke-width="5"/><line x1="1734.6" y1="487.7" x2="1734.6" y2="460.0" stroke="#c8866a" stroke-width="3"/><line x1="1734.6" y1="487.7" x2="1748.4" y2="470.0" stroke="#8a4a30" stroke-width="5"/><line x1="1734.6" y1="487.7" x2="1748.4" y2="470.0" stroke="#d09070" stroke-width="3"/><line x1="1748.4" y1="497.6" x2="1748.4" y2="470.0" stroke="#8a4a30" stroke-width="5"/><line x1="1748.4" y1="497.6" x2="1748.4" y2="470.0" stroke="#c8866a" stroke-width="3"/><line x1="1748.4" y1="497.6" x2="1762.1" y2="480.0" stroke="#8a4a30" stroke-width="5"/><line x1="1748.4" y1="497.6" x2="1762.1" y2="480.0" stroke="#d09070" stroke-width="3"/><line x1="1762.1" y1="507.6" x2="1762.1" y2="480.0" stroke="#8a4a30" stroke-width="5"/><line x1="1762.1" y1="507.6" x2="1762.1" y2="480.0" stroke="#c8866a" stroke-width="3"/><line x1="1762.1" y1="507.6" x2="1775.8" y2="489.9" stroke="#8a4a30" stroke-width="5"/><line x1="1762.1" y1="507.6" x2="1775.8" y2="489.9" stroke="#d09070" stroke-width="3"/><line x1="1775.8" y1="517.6" x2="1775.8" y2="489.9" stroke="#8a4a30" stroke-width="5"/><line x1="1775.8" y1="517.6" x2="1775.8" y2="489.9" stroke="#c8866a" stroke-width="3"/><line x1="1775.8" y1="517.6" x2="1789.5" y2="499.9" stroke="#8a4a30" stroke-width="5"/><line x1="1775.8" y1="517.6" x2="1789.5" y2="499.9" stroke="#d09070" stroke-width="3"/><line x1="1638.6" y1="390.2" x2="1789.5" y2="499.9" stroke="#5a2a0a" stroke-width="6"/><line x1="1638.6" y1="417.8" x2="1789.5" y2="527.6" stroke="#5a2a0a" stroke-width="6"/><line x1="1638.6" y1="550.1" x2="1638.6" y2="280.4" stroke="#74bf64" stroke-width="11"/><line x1="1636.6" y1="550.1" x2="1636.6" y2="280.4" stroke="#4b8a36" stroke-width="1"/><line x1="1640.6" y1="550.1" x2="1640.6" y2="280.4" stroke="#4b8a36" stroke-width="1"/><line x1="1789.5" y1="659.8" x2="1789.5" y2="391.2" stroke="#74bf64" stroke-width="11"/><line x1="1787.5" y1="659.8" x2="1787.5" y2="391.2" stroke="#4b8a36" stroke-width="1"/><line x1="1791.5" y1="659.8" x2="1791.5" y2="391.2" stroke="#4b8a36" stroke-width="1"/><line x1="1683.7" y1="423.0" x2="1683.7" y2="293.6" stroke="#6f9b16" stroke-width="8"/><line x1="1681.7" y1="423.0" x2="1681.7" y2="293.6" stroke="#4a6a08" stroke-width="1"/><line x1="1685.7" y1="423.0" x2="1685.7" y2="293.6" stroke="#4a6a08" stroke-width="1"/><line x1="1743.5" y1="466.5" x2="1743.5" y2="339.0" stroke="#6f9b16" stroke-width="8"/><line x1="1741.5" y1="466.5" x2="1741.5" y2="339.0" stroke="#4a6a08" stroke-width="1"/><line x1="1745.5" y1="466.5" x2="1745.5" y2="339.0" stroke="#4a6a08" stroke-width="1"/><line x1="1558.0" y1="265.4" x2="1868.5" y2="491.1" stroke="#ff4a10" stroke-width="1.1"/><line x1="1558.0" y1="271.6" x2="1868.5" y2="497.3" stroke="#4a10a0" stroke-width="1"/><line x1="1558.0" y1="269.4" x2="1868.5" y2="495.1" stroke="#9c2400" stroke-width="4"/><line x1="1558.0" y1="291.8" x2="1868.5" y2="517.5" stroke="#ff4a10" stroke-width="1.1"/><line x1="1558.0" y1="298.0" x2="1868.5" y2="523.8" stroke="#4a10a0" stroke-width="1"/><line x1="1558.0" y1="295.8" x2="1868.5" y2="521.5" stroke="#9c2400" stroke-width="4"/><line x1="1558.0" y1="315.9" x2="1868.5" y2="541.6" stroke="#ff4a10" stroke-width="1.1"/><line x1="1558.0" y1="322.1" x2="1868.5" y2="547.8" stroke="#4a10a0" stroke-width="1"/><line x1="1558.0" y1="319.9" x2="1868.5" y2="545.6" stroke="#9c2400" stroke-width="4"/><line x1="1558.0" y1="339.9" x2="1637.1" y2="397.4" stroke="#ff4a10" stroke-width="1.1"/><line x1="1558.0" y1="346.1" x2="1637.1" y2="403.6" stroke="#4a10a0" stroke-width="1"/><line x1="1558.0" y1="343.9" x2="1637.1" y2="401.4" stroke="#9c2400" stroke-width="4"/><line x1="1788.0" y1="507.1" x2="1868.5" y2="565.6" stroke="#ff4a10" stroke-width="1.1"/><line x1="1788.0" y1="513.3" x2="1868.5" y2="571.9" stroke="#4a10a0" stroke-width="1"/><line x1="1788.0" y1="511.1" x2="1868.5" y2="569.6" stroke="#9c2400" stroke-width="4"/><line x1="1558.0" y1="366.4" x2="1637.1" y2="423.9" stroke="#ff4a10" stroke-width="1.1"/><line x1="1558.0" y1="372.6" x2="1637.1" y2="430.1" stroke="#4a10a0" stroke-width="1"/><line x1="1558.0" y1="370.4" x2="1637.1" y2="427.9" stroke="#9c2400" stroke-width="4"/><line x1="1788.0" y1="533.6" x2="1868.5" y2="592.1" stroke="#ff4a10" stroke-width="1.1"/><line x1="1788.0" y1="539.8" x2="1868.5" y2="598.3" stroke="#4a10a0" stroke-width="1"/><line x1="1788.0" y1="537.6" x2="1868.5" y2="596.1" stroke="#9c2400" stroke-width="4"/><line x1="1607.0" y1="275.7" x2="1817.3" y2="428.6" stroke="#ff4a10" stroke-width="1.1"/><line x1="1607.0" y1="281.9" x2="1817.3" y2="434.8" stroke="#4a10a0" stroke-width="1"/><line x1="1607.0" y1="279.7" x2="1817.3" y2="432.6" stroke="#9c2400" stroke-width="4"/><line x1="1656.5" y1="286.5" x2="1764.6" y2="365.1" stroke="#ff4a10" stroke-width="1.1"/><line x1="1656.5" y1="292.7" x2="1764.6" y2="371.3" stroke="#4a10a0" stroke-width="1"/><line x1="1656.5" y1="290.5" x2="1764.6" y2="369.1" stroke="#9c2400" stroke-width="4"/><line x1="524.0" y1="546.5" x2="663.4" y2="587.5" stroke="#0048c8" stroke-width="11"/><line x1="673.9" y1="506.5" x2="813.3" y2="547.5" stroke="#0048c8" stroke-width="11"/><line x1="823.7" y1="466.5" x2="963.2" y2="507.5" stroke="#0048c8" stroke-width="11"/><line x1="973.6" y1="426.5" x2="1113.0" y2="467.5" stroke="#0048c8" stroke-width="11"/><line x1="1123.4" y1="386.5" x2="1262.9" y2="427.5" stroke="#0048c8" stroke-width="11"/><line x1="1273.3" y1="346.5" x2="1412.7" y2="387.5" stroke="#0048c8" stroke-width="11"/><line x1="1423.2" y1="306.5" x2="1562.6" y2="347.5" stroke="#0048c8" stroke-width="11"/><line x1="1573.0" y1="266.5" x2="1712.5" y2="307.5" stroke="#0048c8" stroke-width="11"/><polygon points="1572.5,256.5 1572.5,263.6 1585.2,260.2 1585.2,267.3 1597.9,263.9 1597.9,271.1 1610.5,267.7 1610.5,274.8 1623.2,271.4 1623.2,278.5 1635.9,275.1 1635.9,282.2 1648.6,278.9 1648.6,286.0 1661.3,282.6 1661.3,289.7 1673.9,286.3 1673.9,293.4 1686.6,290.0 1686.6,297.1 1699.3,293.8 1699.3,300.9 1712.0,297.5 653.9,579.9 641.3,583.3 641.3,576.2 628.6,579.5 628.6,572.4 615.9,575.8 615.9,568.7 603.2,572.1 603.2,565.0 590.6,568.4 590.6,561.3 577.9,564.6 577.9,557.5 565.2,560.9 565.2,553.8 552.5,557.2 552.5,550.1 539.9,553.5 539.9,546.3 527.2,549.7 527.2,542.6 514.5,546.0 514.5,538.9" fill="#d8d8d8"/><line x1="514.5" y1="538.9" x2="1572.5" y2="256.5" stroke="#7c7c7c" stroke-width="1.8"/><line x1="527.2" y1="542.6" x2="1585.2" y2="260.2" stroke="#7c7c7c" stroke-width="1.8"/><line x1="539.9" y1="546.3" x2="1597.9" y2="263.9" stroke="#7c7c7c" stroke-width="1.8"/><line x1="552.5" y1="550.1" x2="1610.5" y2="267.7" stroke="#7c7c7c" stroke-width="1.8"/><line x1="565.2" y1="553.8" x2="1623.2" y2="271.4" stroke="#7c7c7c" stroke-width="1.8"/><line x1="577.9" y1="557.5" x2="1635.9" y2="275.1" stroke="#7c7c7c" stroke-width="1.8"/><line x1="590.6" y1="561.3" x2="1648.6" y2="278.9" stroke="#7c7c7c" stroke-width="1.8"/><line x1="603.2" y1="565.0" x2="1661.3" y2="282.6" stroke="#7c7c7c" stroke-width="1.8"/><line x1="615.9" y1="568.7" x2="1673.9" y2="286.3" stroke="#7c7c7c" stroke-width="1.8"/><line x1="628.6" y1="572.4" x2="1686.6" y2="290.0" stroke="#7c7c7c" stroke-width="1.8"/><line x1="641.3" y1="576.2" x2="1699.3" y2="293.8" stroke="#7c7c7c" stroke-width="1.8"/><line x1="653.9" y1="579.9" x2="1712.0" y2="297.5" stroke="#7c7c7c" stroke-width="1.8"/><line x1="514.5" y1="538.9" x2="514.5" y2="546.0" stroke="#7c7c7c" stroke-width="1.4"/><rect x="515.5" y="543.5" width="4" height="2.5" fill="#0a3cf0"/><line x1="1572.5" y1="256.5" x2="1572.5" y2="263.6" stroke="#7c7c7c" stroke-width="1.4"/><rect x="1573.5" y="261.1" width="4" height="2.5" fill="#0a3cf0"/><line x1="527.2" y1="542.6" x2="527.2" y2="549.7" stroke="#7c7c7c" stroke-width="1.4"/><rect x="528.2" y="547.2" width="4" height="2.5" fill="#0a3cf0"/><line x1="1585.2" y1="260.2" x2="1585.2" y2="267.3" stroke="#7c7c7c" stroke-width="1.4"/><rect x="1586.2" y="264.8" width="4" height="2.5" fill="#0a3cf0"/><line x1="539.9" y1="546.3" x2="539.9" y2="553.5" stroke="#7c7c7c" stroke-width="1.4"/><rect x="540.9" y="551.0" width="4" height="2.5" fill="#0a3cf0"/><line x1="1597.9" y1="263.9" x2="1597.9" y2="271.1" stroke="#7c7c7c" stroke-width="1.4"/><rect x="1598.9" y="268.6" width="4" height="2.5" fill="#0a3cf0"/><line x1="552.5" y1="550.1" x2="552.5" y2="557.2" stroke="#7c7c7c" stroke-width="1.4"/><rect x="553.5" y="554.7" width="4" height="2.5" fill="#0a3cf0"/><line x1="1610.5" y1="267.7" x2="1610.5" y2="274.8" stroke="#7c7c7c" stroke-width="1.4"/><rect x="1611.5" y="272.3" width="4" height="2.5" fill="#0a3cf0"/><line x1="565.2" y1="553.8" x2="565.2" y2="560.9" stroke="#7c7c7c" stroke-width="1.4"/><rect x="566.2" y="558.4" width="4" height="2.5" fill="#0a3cf0"/><line x1="1623.2" y1="271.4" x2="1623.2" y2="278.5" stroke="#7c7c7c" stroke-width="1.4"/><rect x="1624.2" y="276.0" width="4" height="2.5" fill="#0a3cf0"/><line x1="577.9" y1="557.5" x2="577.9" y2="564.6" stroke="#7c7c7c" stroke-width="1.4"/><rect x="578.9" y="562.1" width="4" height="2.5" fill="#0a3cf0"/><line x1="1635.9" y1="275.1" x2="1635.9" y2="282.2" stroke="#7c7c7c" stroke-width="1.4"/><rect x="1636.9" y="279.7" width="4" height="2.5" fill="#0a3cf0"/><line x1="590.6" y1="561.3" x2="590.6" y2="568.4" stroke="#7c7c7c" stroke-width="1.4"/><rect x="591.6" y="565.9" width="4" height="2.5" fill="#0a3cf0"/><line x1="1648.6" y1="278.9" x2="1648.6" y2="286.0" stroke="#7c7c7c" stroke-width="1.4"/><rect x="1649.6" y="283.5" width="4" height="2.5" fill="#0a3cf0"/><line x1="603.2" y1="565.0" x2="603.2" y2="572.1" stroke="#7c7c7c" stroke-width="1.4"/><rect x="604.2" y="569.6" width="4" height="2.5" fill="#0a3cf0"/><line x1="1661.3" y1="282.6" x2="1661.3" y2="289.7" stroke="#7c7c7c" stroke-width="1.4"/><rect x="1662.3" y="287.2" width="4" height="2.5" fill="#0a3cf0"/><line x1="615.9" y1="568.7" x2="615.9" y2="575.8" stroke="#7c7c7c" stroke-width="1.4"/><rect x="616.9" y="573.3" width="4" height="2.5" fill="#0a3cf0"/><line x1="1673.9" y1="286.3" x2="1673.9" y2="293.4" stroke="#7c7c7c" stroke-width="1.4"/><rect x="1674.9" y="290.9" width="4" height="2.5" fill="#0a3cf0"/><line x1="628.6" y1="572.4" x2="628.6" y2="579.5" stroke="#7c7c7c" stroke-width="1.4"/><rect x="629.6" y="577.0" width="4" height="2.5" fill="#0a3cf0"/><line x1="1686.6" y1="290.0" x2="1686.6" y2="297.1" stroke="#7c7c7c" stroke-width="1.4"/><rect x="1687.6" y="294.6" width="4" height="2.5" fill="#0a3cf0"/><line x1="641.3" y1="576.2" x2="641.3" y2="583.3" stroke="#7c7c7c" stroke-width="1.4"/><rect x="642.3" y="580.8" width="4" height="2.5" fill="#0a3cf0"/><line x1="1699.3" y1="293.8" x2="1699.3" y2="300.9" stroke="#7c7c7c" stroke-width="1.4"/><rect x="1700.3" y="298.4" width="4" height="2.5" fill="#0a3cf0"/><line x1="671.9" y1="496.9" x2="671.9" y2="504.0" stroke="#7c7c7c" stroke-width="1.3"/><rect x="673.9" y="501.0" width="3" height="2" fill="#0a3cf0"/><line x1="684.5" y1="500.6" x2="684.5" y2="507.7" stroke="#7c7c7c" stroke-width="1.3"/><rect x="686.5" y="504.7" width="3" height="2" fill="#0a3cf0"/><line x1="697.2" y1="504.3" x2="697.2" y2="511.5" stroke="#7c7c7c" stroke-width="1.3"/><rect x="699.2" y="508.5" width="3" height="2" fill="#0a3cf0"/><line x1="709.9" y1="508.1" x2="709.9" y2="515.2" stroke="#7c7c7c" stroke-width="1.3"/><rect x="711.9" y="512.2" width="3" height="2" fill="#0a3cf0"/><line x1="722.6" y1="511.8" x2="722.6" y2="518.9" stroke="#7c7c7c" stroke-width="1.3"/><rect x="724.6" y="515.9" width="3" height="2" fill="#0a3cf0"/><line x1="735.2" y1="515.5" x2="735.2" y2="522.6" stroke="#7c7c7c" stroke-width="1.3"/><rect x="737.2" y="519.6" width="3" height="2" fill="#0a3cf0"/><line x1="747.9" y1="519.3" x2="747.9" y2="526.4" stroke="#7c7c7c" stroke-width="1.3"/><rect x="749.9" y="523.4" width="3" height="2" fill="#0a3cf0"/><line x1="760.6" y1="523.0" x2="760.6" y2="530.1" stroke="#7c7c7c" stroke-width="1.3"/><rect x="762.6" y="527.1" width="3" height="2" fill="#0a3cf0"/><line x1="773.3" y1="526.7" x2="773.3" y2="533.8" stroke="#7c7c7c" stroke-width="1.3"/><rect x="775.3" y="530.8" width="3" height="2" fill="#0a3cf0"/><line x1="785.9" y1="530.4" x2="785.9" y2="537.5" stroke="#7c7c7c" stroke-width="1.3"/><rect x="787.9" y="534.5" width="3" height="2" fill="#0a3cf0"/><line x1="798.6" y1="534.2" x2="798.6" y2="541.3" stroke="#7c7c7c" stroke-width="1.3"/><rect x="800.6" y="538.3" width="3" height="2" fill="#0a3cf0"/><line x1="821.7" y1="456.9" x2="821.7" y2="464.0" stroke="#7c7c7c" stroke-width="1.3"/><rect x="823.7" y="461.0" width="3" height="2" fill="#0a3cf0"/><line x1="834.4" y1="460.6" x2="834.4" y2="467.7" stroke="#7c7c7c" stroke-width="1.3"/><rect x="836.4" y="464.7" width="3" height="2" fill="#0a3cf0"/><line x1="847.1" y1="464.3" x2="847.1" y2="471.5" stroke="#7c7c7c" stroke-width="1.3"/><rect x="849.1" y="468.5" width="3" height="2" fill="#0a3cf0"/><line x1="859.7" y1="468.1" x2="859.7" y2="475.2" stroke="#7c7c7c" stroke-width="1.3"/><rect x="861.7" y="472.2" width="3" height="2" fill="#0a3cf0"/><line x1="872.4" y1="471.8" x2="872.4" y2="478.9" stroke="#7c7c7c" stroke-width="1.3"/><rect x="874.4" y="475.9" width="3" height="2" fill="#0a3cf0"/><line x1="885.1" y1="475.5" x2="885.1" y2="482.6" stroke="#7c7c7c" stroke-width="1.3"/><rect x="887.1" y="479.6" width="3" height="2" fill="#0a3cf0"/><line x1="897.8" y1="479.3" x2="897.8" y2="486.4" stroke="#7c7c7c" stroke-width="1.3"/><rect x="899.8" y="483.4" width="3" height="2" fill="#0a3cf0"/><line x1="910.5" y1="483.0" x2="910.5" y2="490.1" stroke="#7c7c7c" stroke-width="1.3"/><rect x="912.5" y="487.1" width="3" height="2" fill="#0a3cf0"/><line x1="923.1" y1="486.7" x2="923.1" y2="493.8" stroke="#7c7c7c" stroke-width="1.3"/><rect x="925.1" y="490.8" width="3" height="2" fill="#0a3cf0"/><line x1="935.8" y1="490.4" x2="935.8" y2="497.5" stroke="#7c7c7c" stroke-width="1.3"/><rect x="937.8" y="494.5" width="3" height="2" fill="#0a3cf0"/><line x1="948.5" y1="494.2" x2="948.5" y2="501.3" stroke="#7c7c7c" stroke-width="1.3"/><rect x="950.5" y="498.3" width="3" height="2" fill="#0a3cf0"/><line x1="971.6" y1="416.9" x2="971.6" y2="424.0" stroke="#7c7c7c" stroke-width="1.3"/><rect x="973.6" y="421.0" width="3" height="2" fill="#0a3cf0"/><line x1="984.3" y1="420.6" x2="984.3" y2="427.7" stroke="#7c7c7c" stroke-width="1.3"/><rect x="986.3" y="424.7" width="3" height="2" fill="#0a3cf0"/><line x1="996.9" y1="424.3" x2="996.9" y2="431.5" stroke="#7c7c7c" stroke-width="1.3"/><rect x="998.9" y="428.5" width="3" height="2" fill="#0a3cf0"/><line x1="1009.6" y1="428.1" x2="1009.6" y2="435.2" stroke="#7c7c7c" stroke-width="1.3"/><rect x="1011.6" y="432.2" width="3" height="2" fill="#0a3cf0"/><line x1="1022.3" y1="431.8" x2="1022.3" y2="438.9" stroke="#7c7c7c" stroke-width="1.3"/><rect x="1024.3" y="435.9" width="3" height="2" fill="#0a3cf0"/><line x1="1035.0" y1="435.5" x2="1035.0" y2="442.6" stroke="#7c7c7c" stroke-width="1.3"/><rect x="1037.0" y="439.6" width="3" height="2" fill="#0a3cf0"/><line x1="1047.6" y1="439.3" x2="1047.6" y2="446.4" stroke="#7c7c7c" stroke-width="1.3"/><rect x="1049.6" y="443.4" width="3" height="2" fill="#0a3cf0"/><line x1="1060.3" y1="443.0" x2="1060.3" y2="450.1" stroke="#7c7c7c" stroke-width="1.3"/><rect x="1062.3" y="447.1" width="3" height="2" fill="#0a3cf0"/><line x1="1073.0" y1="446.7" x2="1073.0" y2="453.8" stroke="#7c7c7c" stroke-width="1.3"/><rect x="1075.0" y="450.8" width="3" height="2" fill="#0a3cf0"/><line x1="1085.7" y1="450.4" x2="1085.7" y2="457.5" stroke="#7c7c7c" stroke-width="1.3"/><rect x="1087.7" y="454.5" width="3" height="2" fill="#0a3cf0"/><line x1="1098.3" y1="454.2" x2="1098.3" y2="461.3" stroke="#7c7c7c" stroke-width="1.3"/><rect x="1100.3" y="458.3" width="3" height="2" fill="#0a3cf0"/><line x1="1121.4" y1="376.9" x2="1121.4" y2="384.0" stroke="#7c7c7c" stroke-width="1.3"/><rect x="1123.4" y="381.0" width="3" height="2" fill="#0a3cf0"/><line x1="1134.1" y1="380.6" x2="1134.1" y2="387.7" stroke="#7c7c7c" stroke-width="1.3"/><rect x="1136.1" y="384.7" width="3" height="2" fill="#0a3cf0"/><line x1="1146.8" y1="384.3" x2="1146.8" y2="391.5" stroke="#7c7c7c" stroke-width="1.3"/><rect x="1148.8" y="388.5" width="3" height="2" fill="#0a3cf0"/><line x1="1159.5" y1="388.1" x2="1159.5" y2="395.2" stroke="#7c7c7c" stroke-width="1.3"/><rect x="1161.5" y="392.2" width="3" height="2" fill="#0a3cf0"/><line x1="1172.1" y1="391.8" x2="1172.1" y2="398.9" stroke="#7c7c7c" stroke-width="1.3"/><rect x="1174.1" y="395.9" width="3" height="2" fill="#0a3cf0"/><line x1="1184.8" y1="395.5" x2="1184.8" y2="402.6" stroke="#7c7c7c" stroke-width="1.3"/><rect x="1186.8" y="399.6" width="3" height="2" fill="#0a3cf0"/><line x1="1197.5" y1="399.3" x2="1197.5" y2="406.4" stroke="#7c7c7c" stroke-width="1.3"/><rect x="1199.5" y="403.4" width="3" height="2" fill="#0a3cf0"/><line x1="1210.2" y1="403.0" x2="1210.2" y2="410.1" stroke="#7c7c7c" stroke-width="1.3"/><rect x="1212.2" y="407.1" width="3" height="2" fill="#0a3cf0"/><line x1="1222.8" y1="406.7" x2="1222.8" y2="413.8" stroke="#7c7c7c" stroke-width="1.3"/><rect x="1224.8" y="410.8" width="3" height="2" fill="#0a3cf0"/><line x1="1235.5" y1="410.4" x2="1235.5" y2="417.5" stroke="#7c7c7c" stroke-width="1.3"/><rect x="1237.5" y="414.5" width="3" height="2" fill="#0a3cf0"/><line x1="1248.2" y1="414.2" x2="1248.2" y2="421.3" stroke="#7c7c7c" stroke-width="1.3"/><rect x="1250.2" y="418.3" width="3" height="2" fill="#0a3cf0"/><line x1="1271.3" y1="336.9" x2="1271.3" y2="344.0" stroke="#7c7c7c" stroke-width="1.3"/><rect x="1273.3" y="341.0" width="3" height="2" fill="#0a3cf0"/><line x1="1284.0" y1="340.6" x2="1284.0" y2="347.7" stroke="#7c7c7c" stroke-width="1.3"/><rect x="1286.0" y="344.7" width="3" height="2" fill="#0a3cf0"/><line x1="1296.7" y1="344.3" x2="1296.7" y2="351.5" stroke="#7c7c7c" stroke-width="1.3"/><rect x="1298.7" y="348.5" width="3" height="2" fill="#0a3cf0"/><line x1="1309.3" y1="348.1" x2="1309.3" y2="355.2" stroke="#7c7c7c" stroke-width="1.3"/><rect x="1311.3" y="352.2" width="3" height="2" fill="#0a3cf0"/><line x1="1322.0" y1="351.8" x2="1322.0" y2="358.9" stroke="#7c7c7c" stroke-width="1.3"/><rect x="1324.0" y="355.9" width="3" height="2" fill="#0a3cf0"/><line x1="1334.7" y1="355.5" x2="1334.7" y2="362.6" stroke="#7c7c7c" stroke-width="1.3"/><rect x="1336.7" y="359.6" width="3" height="2" fill="#0a3cf0"/><line x1="1347.4" y1="359.3" x2="1347.4" y2="366.4" stroke="#7c7c7c" stroke-width="1.3"/><rect x="1349.4" y="363.4" width="3" height="2" fill="#0a3cf0"/><line x1="1360.0" y1="363.0" x2="1360.0" y2="370.1" stroke="#7c7c7c" stroke-width="1.3"/><rect x="1362.0" y="367.1" width="3" height="2" fill="#0a3cf0"/><line x1="1372.7" y1="366.7" x2="1372.7" y2="373.8" stroke="#7c7c7c" stroke-width="1.3"/><rect x="1374.7" y="370.8" width="3" height="2" fill="#0a3cf0"/><line x1="1385.4" y1="370.4" x2="1385.4" y2="377.5" stroke="#7c7c7c" stroke-width="1.3"/><rect x="1387.4" y="374.5" width="3" height="2" fill="#0a3cf0"/><line x1="1398.1" y1="374.2" x2="1398.1" y2="381.3" stroke="#7c7c7c" stroke-width="1.3"/><rect x="1400.1" y="378.3" width="3" height="2" fill="#0a3cf0"/><line x1="1421.2" y1="296.9" x2="1421.2" y2="304.0" stroke="#7c7c7c" stroke-width="1.3"/><rect x="1423.2" y="301.0" width="3" height="2" fill="#0a3cf0"/><line x1="1433.8" y1="300.6" x2="1433.8" y2="307.7" stroke="#7c7c7c" stroke-width="1.3"/><rect x="1435.8" y="304.7" width="3" height="2" fill="#0a3cf0"/><line x1="1446.5" y1="304.3" x2="1446.5" y2="311.5" stroke="#7c7c7c" stroke-width="1.3"/><rect x="1448.5" y="308.5" width="3" height="2" fill="#0a3cf0"/><line x1="1459.2" y1="308.1" x2="1459.2" y2="315.2" stroke="#7c7c7c" stroke-width="1.3"/><rect x="1461.2" y="312.2" width="3" height="2" fill="#0a3cf0"/><line x1="1471.9" y1="311.8" x2="1471.9" y2="318.9" stroke="#7c7c7c" stroke-width="1.3"/><rect x="1473.9" y="315.9" width="3" height="2" fill="#0a3cf0"/><line x1="1484.5" y1="315.5" x2="1484.5" y2="322.6" stroke="#7c7c7c" stroke-width="1.3"/><rect x="1486.5" y="319.6" width="3" height="2" fill="#0a3cf0"/><line x1="1497.2" y1="319.3" x2="1497.2" y2="326.4" stroke="#7c7c7c" stroke-width="1.3"/><rect x="1499.2" y="323.4" width="3" height="2" fill="#0a3cf0"/><line x1="1509.9" y1="323.0" x2="1509.9" y2="330.1" stroke="#7c7c7c" stroke-width="1.3"/><rect x="1511.9" y="327.1" width="3" height="2" fill="#0a3cf0"/><line x1="1522.6" y1="326.7" x2="1522.6" y2="333.8" stroke="#7c7c7c" stroke-width="1.3"/><rect x="1524.6" y="330.8" width="3" height="2" fill="#0a3cf0"/><line x1="1535.2" y1="330.4" x2="1535.2" y2="337.5" stroke="#7c7c7c" stroke-width="1.3"/><rect x="1537.2" y="334.5" width="3" height="2" fill="#0a3cf0"/><line x1="1547.9" y1="334.2" x2="1547.9" y2="341.3" stroke="#7c7c7c" stroke-width="1.3"/><rect x="1549.9" y="338.3" width="3" height="2" fill="#0a3cf0"/><line x1="661.4" y1="586.5" x2="809.5" y2="754.5" stroke="#0048c8" stroke-width="12"/><line x1="663.4" y1="584.5" x2="811.5" y2="752.5" stroke="#1b5cf0" stroke-width="3.5"/><line x1="811.3" y1="546.5" x2="959.4" y2="714.5" stroke="#0048c8" stroke-width="12"/><line x1="813.3" y1="544.5" x2="961.4" y2="712.5" stroke="#1b5cf0" stroke-width="3.5"/><line x1="961.2" y1="506.5" x2="1109.2" y2="674.5" stroke="#0048c8" stroke-width="12"/><line x1="963.2" y1="504.5" x2="1111.2" y2="672.5" stroke="#1b5cf0" stroke-width="3.5"/><line x1="1111.0" y1="466.5" x2="1259.1" y2="634.5" stroke="#0048c8" stroke-width="12"/><line x1="1113.0" y1="464.5" x2="1261.1" y2="632.5" stroke="#1b5cf0" stroke-width="3.5"/><line x1="1260.9" y1="426.5" x2="1408.9" y2="594.5" stroke="#0048c8" stroke-width="12"/><line x1="1262.9" y1="424.5" x2="1410.9" y2="592.5" stroke="#1b5cf0" stroke-width="3.5"/><line x1="1410.7" y1="386.5" x2="1558.8" y2="554.5" stroke="#0048c8" stroke-width="12"/><line x1="1412.7" y1="384.5" x2="1560.8" y2="552.5" stroke="#1b5cf0" stroke-width="3.5"/><line x1="1560.6" y1="346.5" x2="1708.7" y2="514.5" stroke="#0048c8" stroke-width="12"/><line x1="1562.6" y1="344.5" x2="1710.7" y2="512.5" stroke="#1b5cf0" stroke-width="3.5"/><line x1="1710.5" y1="306.5" x2="1858.5" y2="474.5" stroke="#0048c8" stroke-width="12"/><line x1="1712.5" y1="304.5" x2="1860.5" y2="472.5" stroke="#1b5cf0" stroke-width="3.5"/><line x1="679.2" y1="600.1" x2="852.8" y2="586.9" stroke="#a48cf0" stroke-width="1.3"/><line x1="679.2" y1="603.3" x2="852.8" y2="590.1" stroke="#a48cf0" stroke-width="1.3"/><line x1="721.4" y1="647.9" x2="895.0" y2="634.8" stroke="#a48cf0" stroke-width="1.3"/><line x1="721.4" y1="651.1" x2="895.0" y2="638.0" stroke="#a48cf0" stroke-width="1.3"/><line x1="763.6" y1="695.8" x2="937.2" y2="682.7" stroke="#a48cf0" stroke-width="1.3"/><line x1="763.6" y1="699.0" x2="937.2" y2="685.9" stroke="#a48cf0" stroke-width="1.3"/><line x1="824.6" y1="556.6" x2="731.0" y2="660.5" stroke="#8a6ee0" stroke-width="4"/><line x1="823.8" y1="555.8" x2="730.2" y2="659.7" stroke="#b8a4f4" stroke-width="1.3"/><line x1="867.6" y1="605.3" x2="774.0" y2="709.2" stroke="#8a6ee0" stroke-width="4"/><line x1="866.8" y1="604.5" x2="773.2" y2="708.4" stroke="#b8a4f4" stroke-width="1.3"/><line x1="910.5" y1="654.1" x2="809.5" y2="749.5" stroke="#8a6ee0" stroke-width="4"/><line x1="909.7" y1="653.3" x2="808.7" y2="748.7" stroke="#b8a4f4" stroke-width="1.3"/><line x1="978.9" y1="520.1" x2="1152.5" y2="506.9" stroke="#a48cf0" stroke-width="1.3"/><line x1="978.9" y1="523.3" x2="1152.5" y2="510.1" stroke="#a48cf0" stroke-width="1.3"/><line x1="1021.1" y1="567.9" x2="1194.7" y2="554.8" stroke="#a48cf0" stroke-width="1.3"/><line x1="1021.1" y1="571.1" x2="1194.7" y2="558.0" stroke="#a48cf0" stroke-width="1.3"/><line x1="1063.3" y1="615.8" x2="1236.9" y2="602.7" stroke="#a48cf0" stroke-width="1.3"/><line x1="1063.3" y1="619.0" x2="1236.9" y2="605.9" stroke="#a48cf0" stroke-width="1.3"/><line x1="1124.3" y1="476.6" x2="1030.7" y2="580.5" stroke="#8a6ee0" stroke-width="4"/><line x1="1123.5" y1="475.8" x2="1029.9" y2="579.7" stroke="#b8a4f4" stroke-width="1.3"/><line x1="1167.3" y1="525.3" x2="1073.7" y2="629.2" stroke="#8a6ee0" stroke-width="4"/><line x1="1166.5" y1="524.5" x2="1072.9" y2="628.4" stroke="#b8a4f4" stroke-width="1.3"/><line x1="1210.2" y1="574.1" x2="1109.2" y2="669.5" stroke="#8a6ee0" stroke-width="4"/><line x1="1209.4" y1="573.3" x2="1108.4" y2="668.7" stroke="#b8a4f4" stroke-width="1.3"/><line x1="1278.6" y1="440.1" x2="1452.2" y2="426.9" stroke="#a48cf0" stroke-width="1.3"/><line x1="1278.6" y1="443.3" x2="1452.2" y2="430.1" stroke="#a48cf0" stroke-width="1.3"/><line x1="1320.8" y1="487.9" x2="1494.4" y2="474.8" stroke="#a48cf0" stroke-width="1.3"/><line x1="1320.8" y1="491.1" x2="1494.4" y2="478.0" stroke="#a48cf0" stroke-width="1.3"/><line x1="1363.0" y1="535.8" x2="1536.6" y2="522.7" stroke="#a48cf0" stroke-width="1.3"/><line x1="1363.0" y1="539.0" x2="1536.6" y2="525.9" stroke="#a48cf0" stroke-width="1.3"/><line x1="1424.1" y1="396.6" x2="1330.5" y2="500.5" stroke="#8a6ee0" stroke-width="4"/><line x1="1423.3" y1="395.8" x2="1329.7" y2="499.7" stroke="#b8a4f4" stroke-width="1.3"/><line x1="1467.0" y1="445.3" x2="1373.4" y2="549.2" stroke="#8a6ee0" stroke-width="4"/><line x1="1466.2" y1="444.5" x2="1372.6" y2="548.4" stroke="#b8a4f4" stroke-width="1.3"/><line x1="1509.9" y1="494.1" x2="1408.9" y2="589.5" stroke="#8a6ee0" stroke-width="4"/><line x1="1509.1" y1="493.3" x2="1408.1" y2="588.7" stroke="#b8a4f4" stroke-width="1.3"/><line x1="1578.4" y1="360.1" x2="1751.9" y2="346.9" stroke="#a48cf0" stroke-width="1.3"/><line x1="1578.4" y1="363.3" x2="1751.9" y2="350.1" stroke="#a48cf0" stroke-width="1.3"/><line x1="1620.6" y1="407.9" x2="1794.1" y2="394.8" stroke="#a48cf0" stroke-width="1.3"/><line x1="1620.6" y1="411.1" x2="1794.1" y2="398.0" stroke="#a48cf0" stroke-width="1.3"/><line x1="1662.8" y1="455.8" x2="1836.3" y2="442.7" stroke="#a48cf0" stroke-width="1.3"/><line x1="1662.8" y1="459.0" x2="1836.3" y2="445.9" stroke="#a48cf0" stroke-width="1.3"/><line x1="1723.8" y1="316.6" x2="1630.2" y2="420.5" stroke="#8a6ee0" stroke-width="4"/><line x1="1723.0" y1="315.8" x2="1629.4" y2="419.7" stroke="#b8a4f4" stroke-width="1.3"/><line x1="1766.7" y1="365.3" x2="1673.1" y2="469.2" stroke="#8a6ee0" stroke-width="4"/><line x1="1765.9" y1="364.5" x2="1672.3" y2="468.4" stroke="#b8a4f4" stroke-width="1.3"/><line x1="1809.7" y1="414.1" x2="1708.7" y2="509.5" stroke="#8a6ee0" stroke-width="4"/><line x1="1808.9" y1="413.3" x2="1707.9" y2="508.7" stroke="#b8a4f4" stroke-width="1.3"/><line x1="668.8" y1="594.3" x2="1726.8" y2="311.9" stroke="#8c8c8c" stroke-width="9"/><line x1="668.8" y1="594.3" x2="1726.8" y2="311.9" stroke="#ababab" stroke-width="7"/><line x1="668.8" y1="592.5" x2="1726.8" y2="310.1" stroke="#d4d4d4" stroke-width="1.4" stroke-dasharray="1.5 3"/><line x1="670.8" y1="596.1" x2="1728.8" y2="313.7" stroke="#d4d4d4" stroke-width="1.4" stroke-dasharray="1.5 3"/><line x1="683.6" y1="611.1" x2="1741.6" y2="328.7" stroke="#8c8c8c" stroke-width="9"/><line x1="683.6" y1="611.1" x2="1741.6" y2="328.7" stroke="#ababab" stroke-width="7"/><line x1="683.6" y1="609.3" x2="1741.6" y2="326.9" stroke="#d4d4d4" stroke-width="1.4" stroke-dasharray="1.5 3"/><line x1="685.6" y1="612.9" x2="1743.6" y2="330.5" stroke="#d4d4d4" stroke-width="1.4" stroke-dasharray="1.5 3"/><line x1="698.4" y1="627.9" x2="1756.4" y2="345.5" stroke="#8c8c8c" stroke-width="9"/><line x1="698.4" y1="627.9" x2="1756.4" y2="345.5" stroke="#ababab" stroke-width="7"/><line x1="698.4" y1="626.1" x2="1756.4" y2="343.7" stroke="#d4d4d4" stroke-width="1.4" stroke-dasharray="1.5 3"/><line x1="700.4" y1="629.7" x2="1758.4" y2="347.3" stroke="#d4d4d4" stroke-width="1.4" stroke-dasharray="1.5 3"/><line x1="713.2" y1="644.7" x2="1771.2" y2="362.3" stroke="#8c8c8c" stroke-width="9"/><line x1="713.2" y1="644.7" x2="1771.2" y2="362.3" stroke="#ababab" stroke-width="7"/><line x1="713.2" y1="642.9" x2="1771.2" y2="360.5" stroke="#d4d4d4" stroke-width="1.4" stroke-dasharray="1.5 3"/><line x1="715.2" y1="646.5" x2="1773.2" y2="364.1" stroke="#d4d4d4" stroke-width="1.4" stroke-dasharray="1.5 3"/><line x1="728.0" y1="661.5" x2="1786.0" y2="379.1" stroke="#8c8c8c" stroke-width="9"/><line x1="728.0" y1="661.5" x2="1786.0" y2="379.1" stroke="#ababab" stroke-width="7"/><line x1="728.0" y1="659.7" x2="1786.0" y2="377.3" stroke="#d4d4d4" stroke-width="1.4" stroke-dasharray="1.5 3"/><line x1="730.0" y1="663.3" x2="1788.0" y2="380.9" stroke="#d4d4d4" stroke-width="1.4" stroke-dasharray="1.5 3"/><line x1="742.8" y1="678.3" x2="1800.8" y2="395.9" stroke="#8c8c8c" stroke-width="9"/><line x1="742.8" y1="678.3" x2="1800.8" y2="395.9" stroke="#ababab" stroke-width="7"/><line x1="742.8" y1="676.5" x2="1800.8" y2="394.1" stroke="#d4d4d4" stroke-width="1.4" stroke-dasharray="1.5 3"/><line x1="744.8" y1="680.1" x2="1802.8" y2="397.7" stroke="#d4d4d4" stroke-width="1.4" stroke-dasharray="1.5 3"/><line x1="757.6" y1="695.1" x2="1815.6" y2="412.7" stroke="#8c8c8c" stroke-width="9"/><line x1="757.6" y1="695.1" x2="1815.6" y2="412.7" stroke="#ababab" stroke-width="7"/><line x1="757.6" y1="693.3" x2="1815.6" y2="410.9" stroke="#d4d4d4" stroke-width="1.4" stroke-dasharray="1.5 3"/><line x1="759.6" y1="696.9" x2="1817.6" y2="414.5" stroke="#d4d4d4" stroke-width="1.4" stroke-dasharray="1.5 3"/><line x1="772.4" y1="711.9" x2="1830.4" y2="429.5" stroke="#8c8c8c" stroke-width="9"/><line x1="772.4" y1="711.9" x2="1830.4" y2="429.5" stroke="#ababab" stroke-width="7"/><line x1="772.4" y1="710.1" x2="1830.4" y2="427.7" stroke="#d4d4d4" stroke-width="1.4" stroke-dasharray="1.5 3"/><line x1="774.4" y1="713.7" x2="1832.4" y2="431.3" stroke="#d4d4d4" stroke-width="1.4" stroke-dasharray="1.5 3"/><line x1="787.2" y1="728.7" x2="1845.2" y2="446.3" stroke="#8c8c8c" stroke-width="9"/><line x1="787.2" y1="728.7" x2="1845.2" y2="446.3" stroke="#ababab" stroke-width="7"/><line x1="787.2" y1="726.9" x2="1845.2" y2="444.5" stroke="#d4d4d4" stroke-width="1.4" stroke-dasharray="1.5 3"/><line x1="789.2" y1="730.5" x2="1847.2" y2="448.1" stroke="#d4d4d4" stroke-width="1.4" stroke-dasharray="1.5 3"/><line x1="802.0" y1="745.5" x2="1860.0" y2="463.1" stroke="#8c8c8c" stroke-width="9"/><line x1="802.0" y1="745.5" x2="1860.0" y2="463.1" stroke="#ababab" stroke-width="7"/><line x1="802.0" y1="743.7" x2="1860.0" y2="461.3" stroke="#d4d4d4" stroke-width="1.4" stroke-dasharray="1.5 3"/><line x1="804.0" y1="747.3" x2="1862.0" y2="464.9" stroke="#d4d4d4" stroke-width="1.4" stroke-dasharray="1.5 3"/><line x1="809.5" y1="766.3" x2="959.4" y2="821.3" stroke="#6d00d8" stroke-width="5"/><line x1="809.5" y1="861.3" x2="959.4" y2="726.3" stroke="#6d00d8" stroke-width="5"/><line x1="809.5" y1="871.0" x2="959.4" y2="940.4" stroke="#6d00d8" stroke-width="5"/><line x1="809.5" y1="980.4" x2="959.4" y2="831.0" stroke="#6d00d8" stroke-width="5"/><line x1="1109.2" y1="686.3" x2="1259.1" y2="741.3" stroke="#6d00d8" stroke-width="5"/><line x1="1109.2" y1="781.3" x2="1259.1" y2="646.3" stroke="#6d00d8" stroke-width="5"/><line x1="1109.2" y1="791.0" x2="1259.1" y2="860.4" stroke="#6d00d8" stroke-width="5"/><line x1="1109.2" y1="900.4" x2="1259.1" y2="751.0" stroke="#6d00d8" stroke-width="5"/><line x1="1408.9" y1="606.3" x2="1558.8" y2="661.3" stroke="#6d00d8" stroke-width="5"/><line x1="1408.9" y1="701.3" x2="1558.8" y2="566.3" stroke="#6d00d8" stroke-width="5"/><line x1="1408.9" y1="711.0" x2="1558.8" y2="780.4" stroke="#6d00d8" stroke-width="5"/><line x1="1408.9" y1="820.4" x2="1558.8" y2="671.0" stroke="#6d00d8" stroke-width="5"/><line x1="1708.7" y1="526.3" x2="1858.5" y2="581.3" stroke="#6d00d8" stroke-width="5"/><line x1="1708.7" y1="621.3" x2="1858.5" y2="486.3" stroke="#6d00d8" stroke-width="5"/><line x1="1708.7" y1="631.0" x2="1858.5" y2="700.4" stroke="#6d00d8" stroke-width="5"/><line x1="1708.7" y1="740.4" x2="1858.5" y2="591.0" stroke="#6d00d8" stroke-width="5"/><line x1="809.5" y1="866.1" x2="1858.5" y2="586.1" stroke="#6d00d8" stroke-width="5"/><line x1="802.0" y1="757.1" x2="1866.0" y2="473.1" stroke="#ff4a10" stroke-width="1.1"/><line x1="802.0" y1="763.3" x2="1866.0" y2="479.3" stroke="#4a10a0" stroke-width="1"/><line x1="802.0" y1="761.1" x2="1866.0" y2="477.1" stroke="#9c2400" stroke-width="4"/><line x1="802.0" y1="784.8" x2="1866.0" y2="500.8" stroke="#ff4a10" stroke-width="1.1"/><line x1="802.0" y1="791.0" x2="1866.0" y2="507.0" stroke="#4a10a0" stroke-width="1"/><line x1="802.0" y1="788.8" x2="1866.0" y2="504.8" stroke="#9c2400" stroke-width="4"/><line x1="802.0" y1="810.0" x2="1866.0" y2="526.0" stroke="#ff4a10" stroke-width="1.1"/><line x1="802.0" y1="816.2" x2="1866.0" y2="532.2" stroke="#4a10a0" stroke-width="1"/><line x1="802.0" y1="814.0" x2="1866.0" y2="530.0" stroke="#9c2400" stroke-width="4"/><line x1="802.0" y1="835.3" x2="1866.0" y2="551.3" stroke="#ff4a10" stroke-width="1.1"/><line x1="802.0" y1="841.5" x2="1866.0" y2="557.5" stroke="#4a10a0" stroke-width="1"/><line x1="802.0" y1="839.3" x2="1866.0" y2="555.3" stroke="#9c2400" stroke-width="4"/><line x1="802.0" y1="860.5" x2="1866.0" y2="576.5" stroke="#ff4a10" stroke-width="1.1"/><line x1="802.0" y1="866.7" x2="1866.0" y2="582.7" stroke="#4a10a0" stroke-width="1"/><line x1="802.0" y1="864.5" x2="1866.0" y2="580.5" stroke="#9c2400" stroke-width="4"/><line x1="809.5" y1="990.0" x2="809.5" y2="749.5" stroke="#0a7be6" stroke-width="13"/><line x1="807.5" y1="990.0" x2="807.5" y2="749.5" stroke="#0057b0" stroke-width="1"/><line x1="811.5" y1="990.0" x2="811.5" y2="749.5" stroke="#0057b0" stroke-width="1"/><line x1="959.4" y1="950.0" x2="959.4" y2="709.5" stroke="#0a7be6" stroke-width="13"/><line x1="957.4" y1="950.0" x2="957.4" y2="709.5" stroke="#0057b0" stroke-width="1"/><line x1="961.4" y1="950.0" x2="961.4" y2="709.5" stroke="#0057b0" stroke-width="1"/><line x1="1109.2" y1="910.0" x2="1109.2" y2="669.5" stroke="#0a7be6" stroke-width="13"/><line x1="1107.2" y1="910.0" x2="1107.2" y2="669.5" stroke="#0057b0" stroke-width="1"/><line x1="1111.2" y1="910.0" x2="1111.2" y2="669.5" stroke="#0057b0" stroke-width="1"/><line x1="1259.1" y1="870.0" x2="1259.1" y2="629.5" stroke="#0a7be6" stroke-width="13"/><line x1="1257.1" y1="870.0" x2="1257.1" y2="629.5" stroke="#0057b0" stroke-width="1"/><line x1="1261.1" y1="870.0" x2="1261.1" y2="629.5" stroke="#0057b0" stroke-width="1"/><line x1="1408.9" y1="830.0" x2="1408.9" y2="589.5" stroke="#0a7be6" stroke-width="13"/><line x1="1406.9" y1="830.0" x2="1406.9" y2="589.5" stroke="#0057b0" stroke-width="1"/><line x1="1410.9" y1="830.0" x2="1410.9" y2="589.5" stroke="#0057b0" stroke-width="1"/><line x1="1558.8" y1="790.0" x2="1558.8" y2="549.5" stroke="#0a7be6" stroke-width="13"/><line x1="1556.8" y1="790.0" x2="1556.8" y2="549.5" stroke="#0057b0" stroke-width="1"/><line x1="1560.8" y1="790.0" x2="1560.8" y2="549.5" stroke="#0057b0" stroke-width="1"/><line x1="1708.7" y1="750.0" x2="1708.7" y2="509.5" stroke="#0a7be6" stroke-width="13"/><line x1="1706.7" y1="750.0" x2="1706.7" y2="509.5" stroke="#0057b0" stroke-width="1"/><line x1="1710.7" y1="750.0" x2="1710.7" y2="509.5" stroke="#0057b0" stroke-width="1"/><line x1="1858.5" y1="710.0" x2="1858.5" y2="469.5" stroke="#0a7be6" stroke-width="13"/><line x1="1856.5" y1="710.0" x2="1856.5" y2="469.5" stroke="#0057b0" stroke-width="1"/><line x1="1860.5" y1="710.0" x2="1860.5" y2="469.5" stroke="#0057b0" stroke-width="1"/><line x1="522.0" y1="552.5" x2="589.6" y2="818.1" stroke="#6d00d8" stroke-width="5"/><line x1="522.0" y1="769.0" x2="589.6" y2="601.6" stroke="#6d00d8" stroke-width="5"/><line x1="740.5" y1="711.4" x2="809.5" y2="978.0" stroke="#6d00d8" stroke-width="5"/><line x1="740.5" y1="927.8" x2="809.5" y2="761.5" stroke="#6d00d8" stroke-width="5"/><line x1="589.6" y1="697.8" x2="589.6" y2="670.2" stroke="#8a4a30" stroke-width="5"/><line x1="589.6" y1="697.8" x2="589.6" y2="670.2" stroke="#c8866a" stroke-width="3"/><line x1="589.6" y1="697.8" x2="603.3" y2="680.2" stroke="#8a4a30" stroke-width="5"/><line x1="589.6" y1="697.8" x2="603.3" y2="680.2" stroke="#d09070" stroke-width="3"/><line x1="603.3" y1="707.8" x2="603.3" y2="680.2" stroke="#8a4a30" stroke-width="5"/><line x1="603.3" y1="707.8" x2="603.3" y2="680.2" stroke="#c8866a" stroke-width="3"/><line x1="603.3" y1="707.8" x2="617.0" y2="690.1" stroke="#8a4a30" stroke-width="5"/><line x1="603.3" y1="707.8" x2="617.0" y2="690.1" stroke="#d09070" stroke-width="3"/><line x1="617.0" y1="717.8" x2="617.0" y2="690.1" stroke="#8a4a30" stroke-width="5"/><line x1="617.0" y1="717.8" x2="617.0" y2="690.1" stroke="#c8866a" stroke-width="3"/><line x1="617.0" y1="717.8" x2="630.7" y2="700.1" stroke="#8a4a30" stroke-width="5"/><line x1="617.0" y1="717.8" x2="630.7" y2="700.1" stroke="#d09070" stroke-width="3"/><line x1="630.7" y1="727.8" x2="630.7" y2="700.1" stroke="#8a4a30" stroke-width="5"/><line x1="630.7" y1="727.8" x2="630.7" y2="700.1" stroke="#c8866a" stroke-width="3"/><line x1="630.7" y1="727.8" x2="644.4" y2="710.1" stroke="#8a4a30" stroke-width="5"/><line x1="630.7" y1="727.8" x2="644.4" y2="710.1" stroke="#d09070" stroke-width="3"/><line x1="644.4" y1="737.7" x2="644.4" y2="710.1" stroke="#8a4a30" stroke-width="5"/><line x1="644.4" y1="737.7" x2="644.4" y2="710.1" stroke="#c8866a" stroke-width="3"/><line x1="644.4" y1="737.7" x2="658.2" y2="720.1" stroke="#8a4a30" stroke-width="5"/><line x1="644.4" y1="737.7" x2="658.2" y2="720.1" stroke="#d09070" stroke-width="3"/><line x1="658.2" y1="747.7" x2="658.2" y2="720.1" stroke="#8a4a30" stroke-width="5"/><line x1="658.2" y1="747.7" x2="658.2" y2="720.1" stroke="#c8866a" stroke-width="3"/><line x1="658.2" y1="747.7" x2="671.9" y2="730.0" stroke="#8a4a30" stroke-width="5"/><line x1="658.2" y1="747.7" x2="671.9" y2="730.0" stroke="#d09070" stroke-width="3"/><line x1="671.9" y1="757.7" x2="671.9" y2="730.0" stroke="#8a4a30" stroke-width="5"/><line x1="671.9" y1="757.7" x2="671.9" y2="730.0" stroke="#c8866a" stroke-width="3"/><line x1="671.9" y1="757.7" x2="685.6" y2="740.0" stroke="#8a4a30" stroke-width="5"/><line x1="671.9" y1="757.7" x2="685.6" y2="740.0" stroke="#d09070" stroke-width="3"/><line x1="685.6" y1="767.7" x2="685.6" y2="740.0" stroke="#8a4a30" stroke-width="5"/><line x1="685.6" y1="767.7" x2="685.6" y2="740.0" stroke="#c8866a" stroke-width="3"/><line x1="685.6" y1="767.7" x2="699.3" y2="750.0" stroke="#8a4a30" stroke-width="5"/><line x1="685.6" y1="767.7" x2="699.3" y2="750.0" stroke="#d09070" stroke-width="3"/><line x1="699.3" y1="777.6" x2="699.3" y2="750.0" stroke="#8a4a30" stroke-width="5"/><line x1="699.3" y1="777.6" x2="699.3" y2="750.0" stroke="#c8866a" stroke-width="3"/><line x1="699.3" y1="777.6" x2="713.1" y2="760.0" stroke="#8a4a30" stroke-width="5"/><line x1="699.3" y1="777.6" x2="713.1" y2="760.0" stroke="#d09070" stroke-width="3"/><line x1="713.1" y1="787.6" x2="713.1" y2="760.0" stroke="#8a4a30" stroke-width="5"/><line x1="713.1" y1="787.6" x2="713.1" y2="760.0" stroke="#c8866a" stroke-width="3"/><line x1="713.1" y1="787.6" x2="726.8" y2="769.9" stroke="#8a4a30" stroke-width="5"/><line x1="713.1" y1="787.6" x2="726.8" y2="769.9" stroke="#d09070" stroke-width="3"/><line x1="726.8" y1="797.6" x2="726.8" y2="769.9" stroke="#8a4a30" stroke-width="5"/><line x1="726.8" y1="797.6" x2="726.8" y2="769.9" stroke="#c8866a" stroke-width="3"/><line x1="726.8" y1="797.6" x2="740.5" y2="779.9" stroke="#8a4a30" stroke-width="5"/><line x1="726.8" y1="797.6" x2="740.5" y2="779.9" stroke="#d09070" stroke-width="3"/><line x1="589.6" y1="670.2" x2="740.5" y2="779.9" stroke="#5a2a0a" stroke-width="6"/><line x1="589.6" y1="697.8" x2="740.5" y2="807.6" stroke="#5a2a0a" stroke-width="6"/><line x1="589.6" y1="830.1" x2="589.6" y2="560.4" stroke="#74bf64" stroke-width="11"/><line x1="587.6" y1="830.1" x2="587.6" y2="560.4" stroke="#4b8a36" stroke-width="1"/><line x1="591.6" y1="830.1" x2="591.6" y2="560.4" stroke="#4b8a36" stroke-width="1"/><line x1="740.5" y1="939.8" x2="740.5" y2="671.2" stroke="#74bf64" stroke-width="11"/><line x1="738.5" y1="939.8" x2="738.5" y2="671.2" stroke="#4b8a36" stroke-width="1"/><line x1="742.5" y1="939.8" x2="742.5" y2="671.2" stroke="#4b8a36" stroke-width="1"/><line x1="634.7" y1="703.0" x2="634.7" y2="573.6" stroke="#6f9b16" stroke-width="8"/><line x1="632.7" y1="703.0" x2="632.7" y2="573.6" stroke="#4a6a08" stroke-width="1"/><line x1="636.7" y1="703.0" x2="636.7" y2="573.6" stroke="#4a6a08" stroke-width="1"/><line x1="694.5" y1="746.5" x2="694.5" y2="619.0" stroke="#6f9b16" stroke-width="8"/><line x1="692.5" y1="746.5" x2="692.5" y2="619.0" stroke="#4a6a08" stroke-width="1"/><line x1="696.5" y1="746.5" x2="696.5" y2="619.0" stroke="#4a6a08" stroke-width="1"/><line x1="506.0" y1="546.2" x2="816.5" y2="771.9" stroke="#ff4a10" stroke-width="1.1"/><line x1="506.0" y1="552.4" x2="816.5" y2="778.1" stroke="#4a10a0" stroke-width="1"/><line x1="506.0" y1="550.2" x2="816.5" y2="775.9" stroke="#9c2400" stroke-width="4"/><line x1="506.0" y1="572.6" x2="816.5" y2="798.4" stroke="#ff4a10" stroke-width="1.1"/><line x1="506.0" y1="578.8" x2="816.5" y2="804.6" stroke="#4a10a0" stroke-width="1"/><line x1="506.0" y1="576.6" x2="816.5" y2="802.4" stroke="#9c2400" stroke-width="4"/><line x1="506.0" y1="596.7" x2="816.5" y2="822.4" stroke="#ff4a10" stroke-width="1.1"/><line x1="506.0" y1="602.9" x2="816.5" y2="828.6" stroke="#4a10a0" stroke-width="1"/><line x1="506.0" y1="600.7" x2="816.5" y2="826.4" stroke="#9c2400" stroke-width="4"/><line x1="506.0" y1="620.7" x2="585.1" y2="678.2" stroke="#ff4a10" stroke-width="1.1"/><line x1="506.0" y1="626.9" x2="585.1" y2="684.4" stroke="#4a10a0" stroke-width="1"/><line x1="506.0" y1="624.7" x2="585.1" y2="682.2" stroke="#9c2400" stroke-width="4"/><line x1="736.0" y1="787.9" x2="816.5" y2="846.5" stroke="#ff4a10" stroke-width="1.1"/><line x1="736.0" y1="794.1" x2="816.5" y2="852.7" stroke="#4a10a0" stroke-width="1"/><line x1="736.0" y1="791.9" x2="816.5" y2="850.5" stroke="#9c2400" stroke-width="4"/><line x1="506.0" y1="647.2" x2="585.1" y2="704.7" stroke="#ff4a10" stroke-width="1.1"/><line x1="506.0" y1="653.4" x2="585.1" y2="710.9" stroke="#4a10a0" stroke-width="1"/><line x1="506.0" y1="651.2" x2="585.1" y2="708.7" stroke="#9c2400" stroke-width="4"/><line x1="736.0" y1="814.4" x2="816.5" y2="872.9" stroke="#ff4a10" stroke-width="1.1"/><line x1="736.0" y1="820.6" x2="816.5" y2="879.1" stroke="#4a10a0" stroke-width="1"/><line x1="736.0" y1="818.4" x2="816.5" y2="876.9" stroke="#9c2400" stroke-width="4"/><line x1="554.9" y1="556.5" x2="765.2" y2="709.4" stroke="#ff4a10" stroke-width="1.1"/><line x1="554.9" y1="562.7" x2="765.2" y2="715.6" stroke="#4a10a0" stroke-width="1"/><line x1="554.9" y1="560.5" x2="765.2" y2="713.4" stroke="#9c2400" stroke-width="4"/><line x1="604.5" y1="567.3" x2="712.6" y2="645.9" stroke="#ff4a10" stroke-width="1.1"/><line x1="604.5" y1="573.5" x2="712.6" y2="652.1" stroke="#4a10a0" stroke-width="1"/><line x1="604.5" y1="571.3" x2="712.6" y2="649.9" stroke="#9c2400" stroke-width="4"/></svg>
</div>
<svg class="a" style="left:391px;top:207px" width="16" height="16" viewBox="0 0 16 16"><rect x="0" y="0" width="16" height="16" fill="#c8202e"/><path d="M4 8 L7 6 V14 L4 15Z M9 4 L12 3 V13 L9 14Z M7 9 L9 8 V10 L7 11Z" fill="#eee" stroke="#333" stroke-width="0.5"/></svg>
<svg class="a" style="left:1798px;top:209px" width="8" height="13" viewBox="0 0 8 13"><path d="M6 0 L0 6 L6 12" fill="none" stroke="#fff" stroke-width="1.2"/></svg>
<svg class="a" style="left:1825px;top:209px" width="8" height="13" viewBox="0 0 8 13"><path d="M0 0 L6 6 L0 12" fill="none" stroke="#fff" stroke-width="1.2"/></svg>
<div class="a" style="left:1850px;top:215px;width:10px;height:1px;background:#fff"></div>
<svg class="a" style="left:1876px;top:210px" width="10" height="10" viewBox="0 0 10 10"><rect x="0.5" y="2.5" width="7" height="7" fill="none" stroke="#fff"/><path d="M2.5 2.5 V0.5 H9.5 V7.5 H7.5" fill="none" stroke="#fff"/></svg>
<svg class="a" style="left:1901px;top:210px" width="11" height="11" viewBox="0 0 11 11"><path d="M0.5 0.5 L10.5 10.5 M10.5 0.5 L0.5 10.5" stroke="#fff" stroke-width="1.2"/></svg>
<svg class="a" style="left:394px;top:232px" width="16" height="16" viewBox="0 0 16 16"><path d="M8 8 V1 M8 8 L1 14 M8 8 L15 13" stroke="#4a5a78" stroke-width="1.2" fill="none"/></svg>
<svg class="a" style="left:394px;top:256px" width="16" height="16" viewBox="0 0 16 16"><path d="M2 6 L6 2 H14 V10 L10 14 H2Z" fill="#bfe0f4" stroke="#1b2a44" stroke-width="1.1"/><path d="M2 6 H10 V14 M10 6 L14 2" fill="none" stroke="#1b2a44" stroke-width="1.1"/></svg>
<svg class="a" style="left:394px;top:280px" width="16" height="16" viewBox="0 0 16 16"><ellipse cx="8" cy="9" rx="7" ry="3" fill="none" stroke="#1b2a44" stroke-width="1.1"/><circle cx="8" cy="7" r="3.5" fill="#111"/></svg>
<svg class="a" style="left:394px;top:304px" width="16" height="16" viewBox="0 0 16 16"><circle cx="8" cy="2.5" r="2" fill="none" stroke="#1b2a44" stroke-width="1.1"/><path d="M8 4.5 V12" stroke="#1b2a44" stroke-width="1.2"/><ellipse cx="8" cy="10" rx="6.5" ry="3" fill="none" stroke="#1b2a44" stroke-width="1.1"/></svg>
<svg class="a" style="left:394px;top:335px" width="16" height="16" viewBox="0 0 16 16"><rect x="3" y="2" width="10" height="12" fill="#bfe0f4" stroke="#1b2a44" stroke-width="1"/><path d="M13 2 V14" stroke="#e02020" stroke-width="1.6"/><path d="M8 1 V15" stroke="#111" stroke-width="1" stroke-dasharray="1.5 1"/></svg>
<svg class="a" style="left:394px;top:359px" width="16" height="16" viewBox="0 0 16 16"><rect x="2" y="2" width="12" height="12" fill="#bfe0f4" stroke="#1b2a44" stroke-width="1"/><path d="M2 14 L14 2 V2 H14Z" fill="#50d050"/><path d="M2 2 H14 V2Z" fill="#50d050"/><path d="M14 2 L2 2 L14 14Z" fill="#5ae05a"/><path d="M1 15 L15 1" stroke="#111" stroke-dasharray="1.5 1"/></svg>
<svg class="a" style="left:394px;top:383px" width="16" height="16" viewBox="0 0 16 16"><rect x="2" y="2" width="12" height="12" fill="#bfe0f4" stroke="#1b2a44" stroke-width="1"/><rect x="2" y="2" width="12" height="5" fill="#a090f0"/><path d="M1 8 H15" stroke="#111" stroke-dasharray="1.5 1"/></svg>
<svg class="a" style="left:394px;top:407px" width="16" height="16" viewBox="0 0 16 16"><path d="M8 1 L15 4 V12 L8 15 L1 12 V4Z" fill="#a8c8e0" stroke="#1b2a44" stroke-width="1"/><path d="M1 7 L8 10 L15 7 M1 10 L8 13 L15 10" fill="none" stroke="#1b2a44" stroke-width="1"/><path d="M8 7 L15 4 V7 L8 10Z" fill="#70c070"/></svg>
<svg class="a" style="left:394px;top:431px" width="16" height="16" viewBox="0 0 16 16"><path d="M1 8 Q8 2 15 8 Q8 14 1 8Z" fill="#111"/><circle cx="8" cy="8" r="2" fill="#fff"/><path d="M2 14 L14 2" stroke="#111" stroke-width="1.5"/></svg>
<svg class="a" style="left:394px;top:462px" width="16" height="16" viewBox="0 0 16 16"><text x="1" y="8" font-size="8" font-weight="bold" fill="#222" font-family="Liberation Sans">3D</text><circle cx="10" cy="12" r="3.5" fill="none" stroke="#555" stroke-width="1" stroke-dasharray="1.5 1"/></svg>
<div class="a" style="left:392px;top:330px;width:20px;height:1px;background:#c8c8c8"></div>
<div class="a" style="left:392px;top:455px;width:20px;height:1px;background:#c8c8c8"></div>
<div class="a" style="left:624px;top:949px;width:234px;height:30px;background:#666;border:1px solid #111;box-sizing:border-box"></div>
<div class="t" style="left:631.00px;top:952px;font-size:16.10px;color:#f4f4f4;">-159.271, -247.638, 147.866 m</div>
<svg class="a" style="left:430px;top:930px" width="95" height="65" viewBox="0 0 95 65"><path d="M36 59 V28" stroke="#0010ff" stroke-width="2"/><path d="M36 20 L32.5 31 H39.5Z" fill="#0010ff"/><text x="30.5" y="17" font-size="13.5" fill="#0010ff" font-family="Liberation Sans">Z</text><path d="M36 59 L14 43" stroke="#008000" stroke-width="2"/><circle cx="18" cy="46" r="3" fill="#00d000"/><text x="3" y="45" font-size="13" fill="#00c000" font-family="Liberation Sans">Y</text><path d="M36 59 L72 50" stroke="#e00000" stroke-width="2"/><path d="M76 49 L66 46 L68 54Z" fill="#e00000"/><text x="76" y="51" font-size="13" fill="#e00000" font-family="Liberation Sans">X</text></svg>

<!-- ===== Bottom ===== -->
<div class="a" style="left:0;top:1027px;width:1920px;height:50px;background:#efefef"></div>
<div class="a" style="left:0;top:1027px;width:103px;height:25px;background:#cde6f5"></div>
<div class="t" style="left:12px;top:1029px;font-size:17.8px;font-weight:bold;color:#333">Structure</div>
<div class="t" style="left:120.41px;top:1029px;font-size:15.80px;">Foundations</div>
<div class="t" style="left:32.00px;top:1056px;font-size:15.83px;">Select an option from the menu.</div>
<div class="a" style="left:0;top:1077px;width:1920px;height:3px;background:#333"></div>
<svg class="a" style="left:8px;top:1058px" width="16" height="16" viewBox="0 0 16 16"><circle cx="8" cy="8" r="8" fill="#1b7fd0"/><rect x="7" y="7" width="2.4" height="6" fill="#fff"/><circle cx="8.2" cy="4.5" r="1.4" fill="#fff"/></svg>
</body></html>
